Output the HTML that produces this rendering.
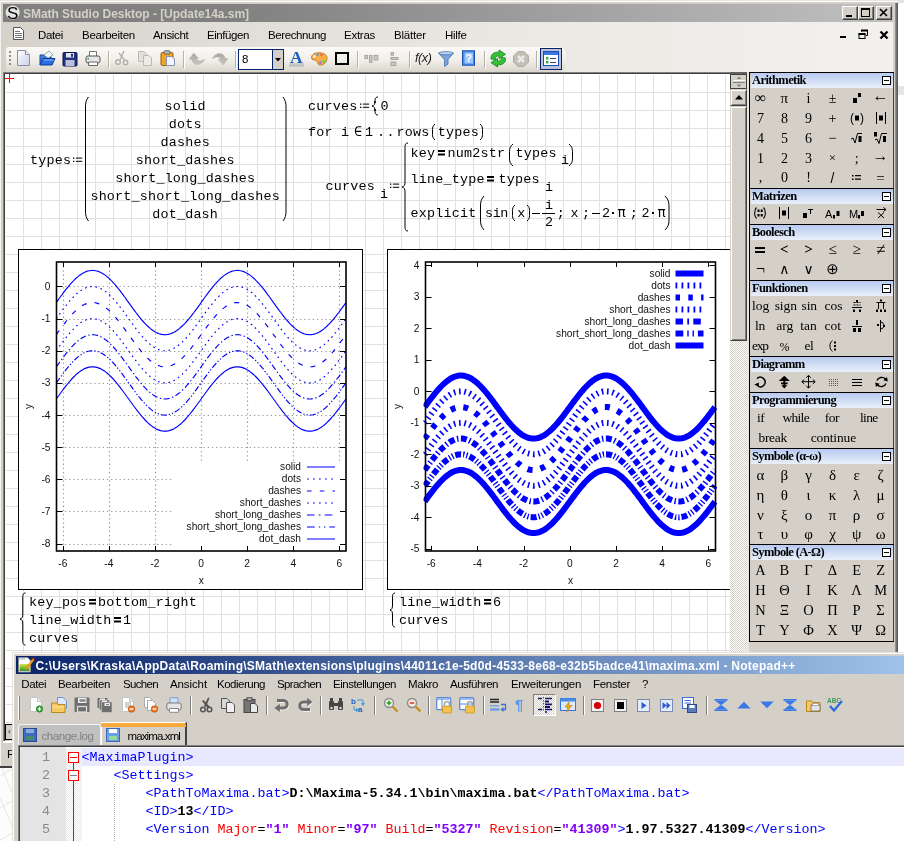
<!DOCTYPE html><html><head><meta charset="utf-8"><title>SMath Studio Desktop</title><style>*{box-sizing:border-box;margin:0;padding:0}
html,body{width:904px;height:841px;overflow:hidden;background:#fbfbfb}
body{position:relative;font-family:"Liberation Sans",sans-serif;font-size:11px;color:#000}
.a{position:absolute}
.t{position:absolute;white-space:pre;line-height:1}
svg{position:absolute;overflow:visible}
body{will-change:transform}
</style></head><body>
<div class="a" style="left:0;top:0;width:904px;height:3px;background:#e6e4de"></div>
<div class="a" style="left:898px;top:3px;width:6px;height:650px;background:#fff"></div>
<div class="a" style="left:898px;top:86px;width:6px;height:9px;background:#e4e4e4"></div>
<svg style="left:0;top:768px" width="14" height="73"><rect width="14" height="73" fill="#fcfcfc"/><path d="M0 8 L14 0 M0 40 L14 32 M0 72 L14 64 M2 0 L14 30 M0 30 L14 62" stroke="#e6e6e6" fill="none"/></svg>
<div class="a" style="left:0;top:2px;width:898px;height:766px;background:#d4d0c8"></div>
<div class="a" style="left:0;top:1px;width:898px;height:1px;background:#fff"></div>
<div class="a" style="left:0px;top:1px;width:1px;height:767px;background:#f4f3f0"></div>
<div class="a" style="left:895px;top:3px;width:3px;height:765px;background:linear-gradient(90deg,#a0a09a,#707070 50%,#505050)"></div>
<div class="a" style="left:0;top:766px;width:14px;height:2px;background:#404040"></div>
<div class="a" style="left:3px;top:4px;width:890px;height:18px;background:linear-gradient(90deg,#808080,#808080 25%,#c0c0c0)"></div>
<div class="t" style="left:23px;top:7.5px;font:bold 12px 'Liberation Sans',sans-serif;line-height:1;color:#d4d0c8;letter-spacing:-0.037px;">SMath Studio Desktop - [Update14a.sm]</div>
<svg style="left:5px;top:5px" width="16" height="16"><circle cx="7.7" cy="7.5" r="7" fill="#e4e4e4"/><text x="7.7" y="13.5" font-family="Liberation Sans" font-size="17" text-anchor="middle" fill="#000">S</text></svg>
<div class="a" style="left:842px;top:6px;width:16px;height:14px;background:#d4d0c8;border:1px solid;border-color:#fff #404040 #404040 #fff;box-shadow:inset -1px -1px 0 #808080"></div><div class="a" style="left:846px;top:15px;width:6px;height:2px;background:#000"></div><div class="a" style="left:858px;top:6px;width:16px;height:14px;background:#d4d0c8;border:1px solid;border-color:#fff #404040 #404040 #fff;box-shadow:inset -1px -1px 0 #808080"></div><div class="a" style="left:861px;top:8px;width:9px;height:9px;border:1px solid #000;border-top:2px solid #000"></div><div class="a" style="left:876px;top:6px;width:16px;height:14px;background:#d4d0c8;border:1px solid;border-color:#fff #404040 #404040 #fff;box-shadow:inset -1px -1px 0 #808080"></div><svg style="left:879px;top:8px" width="10" height="9"><path d="M1 1 L8 8 M8 1 L1 8" stroke="#000" stroke-width="1.6"/></svg>
<div class="a" style="left:3px;top:22px;width:890px;height:50px;background:linear-gradient(90deg,#d6d2ca,#e1ded7 25%,#ebe9e4 60%,#f2f1ed)"></div>
<div class="t" style="left:38px;top:30px;font:11.5px 'Liberation Sans',sans-serif;line-height:1;color:#000;letter-spacing:-0.372px;">Datei</div>
<div class="t" style="left:82px;top:30px;font:11.5px 'Liberation Sans',sans-serif;line-height:1;color:#000;letter-spacing:-0.263px;">Bearbeiten</div>
<div class="t" style="left:153px;top:30px;font:11.5px 'Liberation Sans',sans-serif;line-height:1;color:#000;letter-spacing:-0.317px;">Ansicht</div>
<div class="t" style="left:207px;top:30px;font:11.5px 'Liberation Sans',sans-serif;line-height:1;color:#000;letter-spacing:-0.426px;">Einfügen</div>
<div class="t" style="left:268px;top:30px;font:11.5px 'Liberation Sans',sans-serif;line-height:1;color:#000;letter-spacing:-0.403px;">Berechnung</div>
<div class="t" style="left:344px;top:30px;font:11.5px 'Liberation Sans',sans-serif;line-height:1;color:#000;letter-spacing:-0.266px;">Extras</div>
<div class="t" style="left:394px;top:30px;font:11.5px 'Liberation Sans',sans-serif;line-height:1;color:#000;letter-spacing:-0.179px;">Blätter</div>
<div class="t" style="left:445px;top:30px;font:11.5px 'Liberation Sans',sans-serif;line-height:1;color:#000;letter-spacing:-0.303px;">Hilfe</div>
<svg style="left:13px;top:27px" width="12" height="14"><path d="M0.5 0.5 H7.5 L10.5 3.5 V12.5 H0.5 Z" fill="#fff" stroke="#555"/><path d="M2 4.5H7 M2 6.5H9 M2 8.5H9 M2 10.5H9" stroke="#777"/></svg>
<div class="a" style="left:840px;top:36px;width:6px;height:2px;background:#000"></div>
<svg style="left:858px;top:29px" width="12" height="12"><path d="M3.5 2.5V1.5H9.5V6.5H8" fill="none" stroke="#000"/><path d="M3 1.5H10" stroke="#000" stroke-width="2"/><rect x="1" y="5" width="6" height="4.5" fill="none" stroke="#000"/><path d="M0.5 5H7.5" stroke="#000" stroke-width="2"/></svg>
<svg style="left:879px;top:30px" width="10" height="10"><path d="M1.5 1.5 L8.5 8.5 M8.5 1.5 L1.5 8.5" stroke="#000" stroke-width="2.3"/></svg>
<div class="a" style="left:3px;top:72px;width:727px;height:652px;background:#404040;border-top:1px solid #808080;border-left:1px solid #808080"></div>
<div class="a" style="left:5px;top:74px;width:725px;height:650px;background:#fff"></div>
<div class="a" style="left:6px;top:75px;width:724px;height:649px;background-image:linear-gradient(90deg,#e0e0e0 1px,transparent 1px),linear-gradient(#e0e0e0 1px,transparent 1px);background-size:18px 18px;background-position:17px 17px"></div>
<div class="a" style="left:5px;top:78px;width:9px;height:1px;background:#f00"></div><div class="a" style="left:9px;top:74px;width:1px;height:9px;background:#f00"></div>
<div class="a" style="left:4px;top:724px;width:10px;height:44px;background:#d4d0c8"></div>
<div class="a" style="left:3px;top:724px;width:2px;height:17px;background:linear-gradient(90deg,#808080 50%,#404040 50%)"></div>
<div class="a" style="left:5px;top:724px;width:7px;height:16px;background:#d4d0c8;border:1px solid #000;border-right:0;border-left-width:1.5px"></div>
<div class="a" style="left:3px;top:741px;width:9px;height:2px;background:#fff"></div>
<svg style="left:7px;top:729px" width="4" height="6"><path d="M3.2 0.5 L0.8 2.7 L3.2 5 Z" fill="#808080"/></svg>
<div class="t" style="left:7px;top:749px;font:11.5px 'Liberation Sans',sans-serif;line-height:1;color:#000;">F</div>
<div class="a" style="left:0;top:766px;width:14px;height:2px;background:#404040"></div>
<div class="a" style="left:6px;top:47px;width:560px;height:25px;border-radius:3px 7px 7px 3px;background:linear-gradient(#fbfaf8,#f0eee8 55%,#d9d5cb)"></div>
<div class="a" style="left:9px;top:51px;width:2px;height:16px;background:repeating-linear-gradient(#8f8c84 0 2px,transparent 2px 4px)"></div>
<svg style="left:16px;top:50px" width="16" height="16" viewBox="0 0 16 16"><defs><linearGradient id="gn" x1="0" y1="0" x2="1" y2="1"><stop offset="0" stop-color="#fff"/><stop offset="1" stop-color="#c9cfe8"/></linearGradient></defs><path d="M1.5 0.5 H9.5 L13.5 4.5 V15.5 H1.5 Z" fill="url(#gn)" stroke="#8a8fa8"/><path d="M9.5 0.5 V4.5 H13.5" fill="#eef" stroke="#8a8fa8"/></svg>
<svg style="left:39px;top:50px" width="16" height="16" viewBox="0 0 16 16"><path d="M1 15 V5 H5 L6 6.5 H12 V9" fill="#3d7fe0" stroke="#1246a8"/><path d="M5 5 L10 1 L14 5 L9 8 Z" fill="#f4f7ff" stroke="#8aa"/><path d="M1 15 L4 8.5 H16 L13 15 Z" fill="#2a6ee0" stroke="#0a3a9a"/><path d="M4.5 10 H14.5" stroke="#8bb8ff"/></svg>
<svg style="left:62px;top:51px" width="16" height="16" viewBox="0 0 16 16"><rect x="1" y="1.5" width="14" height="13.5" rx="1" fill="#23307e" stroke="#0e1550"/><rect x="4" y="2" width="8" height="4.5" fill="#dfe6f7"/><rect x="9" y="2.8" width="2" height="3" fill="#23307e"/><rect x="3.5" y="9" width="9" height="6" fill="#b9c0dc"/></svg>
<svg style="left:85px;top:50px" width="16" height="16" viewBox="0 0 16 16"><path d="M4.5 6 V1.5 H11.5 V6" fill="#fff" stroke="#777"/><rect x="1" y="6" width="14" height="7" rx="2" fill="#e6e6e6" stroke="#555"/><path d="M3.5 12 H12.5 V15.5 H3.5 Z" fill="#fff" stroke="#666"/><rect x="2.5" y="8" width="1.5" height="1.5" fill="#3a3"/></svg>
<div class="a" style="left:108px;top:51px;width:1px;height:17px;background:#b5b1a6"></div><div class="a" style="left:109px;top:52px;width:1px;height:17px;background:#fff"></div>
<svg style="left:114px;top:50px" width="16" height="16" viewBox="0 0 16 16"><g stroke="#b4b0a5" fill="none" stroke-width="1.4"><path d="M10 1 L6 10 M5 3 L10.5 10"/><circle cx="4" cy="12" r="2.3"/><circle cx="11.5" cy="12.5" r="2.3"/></g></svg>
<svg style="left:137px;top:50px" width="16" height="16" viewBox="0 0 16 16"><g stroke="#bdb9ae" fill="#e4e1d9"><path d="M1.5 1.5 H7 L9.5 4 V11.5 H1.5 Z"/><path d="M6.5 5.5 H12 L14.5 8 V15.5 H6.5 Z" fill="#ecebe6"/></g></svg>
<svg style="left:160px;top:50px" width="16" height="16" viewBox="0 0 16 16"><rect x="1" y="2.5" width="12" height="13" rx="1.5" fill="#f0a424" stroke="#9a5a0a"/><rect x="4" y="0.8" width="6" height="3.2" rx="1" fill="#bbb" stroke="#666"/><path d="M6.5 6.5 H12 L14.5 9 V15.5 H6.5 Z" fill="#f4f6ff" stroke="#8a90b0"/></svg>
<div class="a" style="left:183px;top:51px;width:1px;height:17px;background:#b5b1a6"></div><div class="a" style="left:184px;top:52px;width:1px;height:17px;background:#fff"></div>
<svg style="left:189px;top:50px" width="16" height="16" viewBox="0 0 16 16"><defs><linearGradient id="gu" x1="0" y1="0" x2="0" y2="1"><stop offset="0" stop-color="#a9a69e"/><stop offset="1" stop-color="#c9c6bd"/></linearGradient></defs><path d="M4.7 3 L9.7 8.5 L7.3 9 C8 11 11 12 15.8 9 C13.5 14 9 15.5 6 14 C4 13 3 11 2.8 9.2 L0 9.5 Z" fill="url(#gu)" stroke="#b5b2a9" stroke-width="0.5"/></svg>
<svg style="left:212px;top:50px" width="16" height="16" viewBox="0 0 16 16"><path d="M11.3 14.9 L6.3 9.5 L8.7 9 C8 7 5 6 0.2 8.8 C2.5 4 7 2.5 10 4 C12 5 13 7 13.2 8.8 L16 8.5 Z" fill="url(#gu)" stroke="#b5b2a9" stroke-width="0.5"/></svg>
<div class="a" style="left:235px;top:51px;width:1px;height:17px;background:#b5b1a6"></div><div class="a" style="left:236px;top:52px;width:1px;height:17px;background:#fff"></div>
<div class="a" style="left:238px;top:49px;width:46px;height:21px;background:#fff;border:1px solid #0a246a"></div>
<div class="a" style="left:272px;top:50px;width:11px;height:19px;background:#d4d0c8;border-left:1px solid #0a246a"></div>
<svg style="left:275px;top:58px" width="6" height="4"><path d="M0 0 H6 L3 3.5 Z" fill="#000"/></svg>
<div class="t" style="left:242px;top:54px;font:11.5px 'Liberation Sans',sans-serif;line-height:1;color:#000;">8</div>
<svg style="left:288px;top:50px" width="16" height="16" viewBox="0 0 16 16"><text x="8.3" y="13" font-family="Liberation Serif" font-weight="bold" font-size="17.5" text-anchor="middle" fill="#1a5fc0">A</text><rect x="1" y="13.3" width="15" height="3.6" fill="#c4c4c4"/></svg>
<svg style="left:311px;top:50px" width="16" height="16" viewBox="0 0 16 16"><path d="M7 2.8 C2.5 3 0.3 5.5 0.6 8 C0.9 10 2.5 10.2 4 10 C5.5 9.8 6 10.8 6.3 12.3 C6.8 15 9.5 15.8 12.5 14.3 C15 13 16.3 10.3 16 7.5 C15.6 4.3 12 2.6 7 2.8 Z" fill="#f6ad48" stroke="#c0741a" stroke-width="0.9"/><circle cx="3.3" cy="6.5" r="1.3" fill="#fff"/><circle cx="6.5" cy="4.8" r="1.2" fill="#4ae"/><circle cx="10.3" cy="5" r="1.2" fill="#e64"/><circle cx="13" cy="8" r="1.2" fill="#fb3"/><circle cx="12.6" cy="11.3" r="1.4" fill="#5d5"/><circle cx="9.3" cy="12.6" r="1.3" fill="#a6e"/></svg>
<svg style="left:334px;top:50px" width="16" height="16" viewBox="0 0 16 16"><rect x="2" y="3" width="12" height="11" fill="none" stroke="#000" stroke-width="2"/></svg>
<div class="a" style="left:357px;top:51px;width:1px;height:17px;background:#b5b1a6"></div><div class="a" style="left:358px;top:52px;width:1px;height:17px;background:#fff"></div>
<svg style="left:364px;top:50px" width="16" height="16" viewBox="0 0 16 16"><g fill="#c9c7c0" stroke="#a4a29a" stroke-width="0.9"><rect x="0.8" y="5.4" width="2.8" height="3.2"/><rect x="5.6" y="5.4" width="2.4" height="7"/><rect x="10" y="5.4" width="3.8" height="4.6"/></g></svg>
<svg style="left:387px;top:50px" width="16" height="16" viewBox="0 0 16 16"><g fill="#c9c7c0" stroke="#a4a29a" stroke-width="0.9"><rect x="4" y="2.6" width="2.6" height="2.6"/><rect x="4" y="7.5" width="7" height="2"/><rect x="4" y="12" width="4.8" height="3.6"/></g></svg>
<div class="a" style="left:409px;top:51px;width:1px;height:17px;background:#b5b1a6"></div><div class="a" style="left:410px;top:52px;width:1px;height:17px;background:#fff"></div>
<div class="t" style="left:415px;top:52px;font:italic 12.5px 'Liberation Sans',sans-serif;line-height:1;color:#222;letter-spacing:-0.391px;">f(x)</div>
<svg style="left:438px;top:51px" width="16" height="16" viewBox="0 0 16 16"><path d="M0.5 2 H15.5 L10 8.5 V13 L6.5 15.5 V8.5 Z" fill="#7aa4da" stroke="#3f6fae" stroke-width="0.8"/><ellipse cx="8" cy="2.2" rx="7.3" ry="1.6" fill="#b8d2f2" stroke="#3f6fae" stroke-width="0.7"/></svg>
<svg style="left:461px;top:50px" width="16" height="16" viewBox="0 0 16 16"><rect x="1.5" y="0.8" width="12" height="14.4" fill="#4a8df0" stroke="#1c4fb0"/><rect x="3.5" y="2.5" width="8.5" height="11" fill="#9cc4ff"/><text x="7.8" y="12" font-family="Liberation Sans" font-weight="bold" font-size="11" text-anchor="middle" fill="#fff">?</text></svg>
<div class="a" style="left:484px;top:51px;width:1px;height:17px;background:#b5b1a6"></div><div class="a" style="left:485px;top:52px;width:1px;height:17px;background:#fff"></div>
<svg style="left:490px;top:50px" width="16" height="16" viewBox="0 0 16 16"><g fill="#35c135" stroke="#14801a" stroke-width="0.8"><path d="M1 9 C0.5 4.5 4 1.5 9 2.3 L9 0 L15.5 4.3 L9 8.6 L9 6 C6.5 5.6 5 7 5.3 9.6 Z"/><path d="M15.5 8 C16 12.5 12.5 15.5 7.5 14.7 L7.5 17 L1 12.7 L7.5 8.4 L7.5 11 C10 11.4 11.5 10 11.2 7.4 Z"/></g></svg>
<svg style="left:513px;top:51px" width="16" height="16" viewBox="0 0 16 16"><path d="M5 0.5 H11 L15.5 5 V11 L11 15.5 H5 L0.5 11 V5 Z" fill="#c2bfb6" stroke="#b0ada4"/><path d="M5 5 L11 11 M11 5 L5 11" stroke="#ecebe6" stroke-width="2.6"/></svg>
<div class="a" style="left:536px;top:51px;width:1px;height:17px;background:#b5b1a6"></div><div class="a" style="left:537px;top:52px;width:1px;height:17px;background:#fff"></div>
<div class="a" style="left:540px;top:48px;width:22px;height:22px;background:#b8c2da;border:1px solid #0a246a"></div>
<svg style="left:543px;top:51px" width="16" height="16" viewBox="0 0 16 16"><rect x="0.5" y="0.5" width="15" height="14" fill="#fff" stroke="#1c4fb0"/><rect x="1" y="1" width="14" height="3" fill="#3a78e0"/><rect x="3" y="6" width="2.5" height="2.5" fill="#4a4"/><rect x="3" y="10" width="2.5" height="2.5" fill="#4a4"/><path d="M7 7.5 H13 M7 11.5 H13" stroke="#346"/></svg>
<div class="t" style="left:30px;top:153.7px;font:13.4px 'Liberation Mono',monospace;line-height:1;color:#000;letter-spacing:0.203px;">types</div>
<svg style="left:73px;top:157px" width="10" height="6"><rect x="0" y="0.5" width="1.3" height="1.3"/><rect x="0" y="3.7" width="1.3" height="1.3"/><rect x="2.9" y="0.6" width="6.3" height="1"/><rect x="2.9" y="3.8" width="6.3" height="1"/></svg>
<svg style="left:85.3px;top:97px" width="3.5" height="124"><path d="M3.5 0 C1.05 3.0 0.5 6.0 0.5 10 V114 C0.5 118.0 1.05 121.0 3.5 124" fill="none" stroke="#000" stroke-width="1"/></svg>
<svg style="left:282.5px;top:97px" width="3.5" height="124"><path d="M0 0 C2.4499999999999997 3.0 3.0 6.0 3.0 10 V114 C3.0 118.0 2.4499999999999997 121.0 0 124" fill="none" stroke="#000" stroke-width="1"/></svg>
<div class="t" style="left:164.6px;top:99.7px;font:13.4px 'Liberation Mono',monospace;line-height:1;color:#000;letter-spacing:0.203px;">solid</div>
<div class="t" style="left:168.7px;top:117.7px;font:13.4px 'Liberation Mono',monospace;line-height:1;color:#000;letter-spacing:0.201px;">dots</div>
<div class="t" style="left:160.5px;top:135.7px;font:13.4px 'Liberation Mono',monospace;line-height:1;color:#000;letter-spacing:0.204px;">dashes</div>
<div class="t" style="left:135.8px;top:153.7px;font:13.4px 'Liberation Mono',monospace;line-height:1;color:#000;letter-spacing:0.204px;">short_dashes</div>
<div class="t" style="left:115.2px;top:171.7px;font:13.4px 'Liberation Mono',monospace;line-height:1;color:#000;letter-spacing:0.204px;">short_long_dashes</div>
<div class="t" style="left:90.4px;top:189.7px;font:13.4px 'Liberation Mono',monospace;line-height:1;color:#000;letter-spacing:0.204px;">short_short_long_dashes</div>
<div class="t" style="left:152.2px;top:207.7px;font:13.4px 'Liberation Mono',monospace;line-height:1;color:#000;letter-spacing:0.203px;">dot_dash</div>
<div class="t" style="left:308px;top:99.7px;font:13.4px 'Liberation Mono',monospace;line-height:1;color:#000;letter-spacing:0.204px;">curves</div>
<svg style="left:359.7px;top:103px" width="10" height="6"><rect x="0" y="0.5" width="1.3" height="1.3"/><rect x="0" y="3.7" width="1.3" height="1.3"/><rect x="2.9" y="0.6" width="6.3" height="1"/><rect x="2.9" y="3.8" width="6.3" height="1"/></svg>
<svg style="left:372px;top:97px" width="6" height="18"><path d="M6 0 C2.7 0 3.0 3 3.0 6 V4.0 C3.0 7.0 2.4000000000000004 8.5 0 9.0 C2.4000000000000004 9.5 3.0 11.0 3.0 14.0 V12 C3.0 15 2.7 18 6 18" fill="none" stroke="#000" stroke-width="1"/></svg>
<div class="t" style="left:380.5px;top:99.7px;font:13.4px 'Liberation Mono',monospace;line-height:1;color:#000;letter-spacing:0.193px;">0</div>
<div class="t" style="left:308px;top:125.7px;font:13.4px 'Liberation Mono',monospace;line-height:1;color:#000;letter-spacing:0.204px;">for</div>
<div class="t" style="left:341px;top:125.7px;font:13.4px 'Liberation Mono',monospace;line-height:1;color:#000;letter-spacing:0.193px;">i</div>
<div class="t" style="left:354px;top:124.5px;font:13.5px 'DejaVu Sans Mono',monospace;line-height:1;color:#000;letter-spacing:0.359px;">∈</div>
<div class="t" style="left:365px;top:125.7px;font:13.4px 'Liberation Mono',monospace;line-height:1;color:#000;letter-spacing:0.193px;">1</div>
<div class="t" style="left:377px;top:125.7px;font:13.4px 'Liberation Mono',monospace;line-height:1;color:#000;letter-spacing:1.461px;">..</div>
<div class="t" style="left:396.5px;top:125.7px;font:13.4px 'Liberation Mono',monospace;line-height:1;color:#000;letter-spacing:0.201px;">rows</div>
<svg style="left:432px;top:124px" width="3" height="16"><path d="M3 0 C0.8999999999999999 1.68 0.5 3.36 0.5 5.6 V10.4 C0.5 12.64 0.8999999999999999 14.32 3 16" fill="none" stroke="#000" stroke-width="1"/></svg>
<div class="t" style="left:437.7px;top:125.7px;font:13.4px 'Liberation Mono',monospace;line-height:1;color:#000;letter-spacing:0.203px;">types</div>
<svg style="left:480px;top:124px" width="3" height="16"><path d="M0 0 C2.0999999999999996 1.68 2.5 3.36 2.5 5.6 V10.4 C2.5 12.64 2.0999999999999996 14.32 0 16" fill="none" stroke="#000" stroke-width="1"/></svg>
<div class="t" style="left:325.5px;top:180.2px;font:13.4px 'Liberation Mono',monospace;line-height:1;color:#000;letter-spacing:0.204px;">curves</div>
<div class="t" style="left:380px;top:188.2px;font:13.4px 'Liberation Mono',monospace;line-height:1;color:#000;letter-spacing:0.193px;">i</div>
<svg style="left:390px;top:183px" width="10" height="6"><rect x="0" y="0.5" width="1.3" height="1.3"/><rect x="0" y="3.7" width="1.3" height="1.3"/><rect x="2.9" y="0.6" width="6.3" height="1"/><rect x="2.9" y="3.8" width="6.3" height="1"/></svg>
<svg style="left:401.8px;top:143px" width="6" height="88"><path d="M6 0 C2.7 0 3.0 3 3.0 6 V39.0 C3.0 42.0 2.4000000000000004 43.5 0 44.0 C2.4000000000000004 44.5 3.0 46.0 3.0 49.0 V82 C3.0 85 2.7 88 6 88" fill="none" stroke="#000" stroke-width="1"/></svg>
<div class="t" style="left:410.5px;top:146.7px;font:13.4px 'Liberation Mono',monospace;line-height:1;color:#000;letter-spacing:0.204px;">key</div>
<svg style="left:437.5px;top:150px" width="8" height="6"><rect x="0" y="0" width="7" height="2"/><rect x="0" y="3.5" width="7" height="2"/></svg>
<div class="t" style="left:447.5px;top:146.7px;font:13.4px 'Liberation Mono',monospace;line-height:1;color:#000;letter-spacing:0.204px;">num2str</div>
<svg style="left:509px;top:144px" width="4" height="22"><path d="M4 0 C1.2 2.3099999999999996 0.5 4.619999999999999 0.5 7.699999999999999 V14.3 C0.5 17.380000000000003 1.2 19.69 4 22" fill="none" stroke="#000" stroke-width="1"/></svg>
<div class="t" style="left:515.5px;top:146.7px;font:13.4px 'Liberation Mono',monospace;line-height:1;color:#000;letter-spacing:0.203px;">types</div>
<div class="t" style="left:561px;top:154.2px;font:13.4px 'Liberation Mono',monospace;line-height:1;color:#000;letter-spacing:0.193px;">i</div>
<svg style="left:569.3px;top:144px" width="4" height="22"><path d="M0 0 C2.8 2.3099999999999996 3.5 4.619999999999999 3.5 7.699999999999999 V14.3 C3.5 17.380000000000003 2.8 19.69 0 22" fill="none" stroke="#000" stroke-width="1"/></svg>
<div class="t" style="left:410.5px;top:172.7px;font:13.4px 'Liberation Mono',monospace;line-height:1;color:#000;letter-spacing:0.204px;">line_type</div>
<svg style="left:487px;top:176px" width="8" height="6"><rect x="0" y="0" width="7" height="2"/><rect x="0" y="3.5" width="7" height="2"/></svg>
<div class="t" style="left:498.5px;top:172.7px;font:13.4px 'Liberation Mono',monospace;line-height:1;color:#000;letter-spacing:0.203px;">types</div>
<div class="t" style="left:545px;top:181.2px;font:13.4px 'Liberation Mono',monospace;line-height:1;color:#000;letter-spacing:0.193px;">i</div>
<div class="t" style="left:410.5px;top:207.2px;font:13.4px 'Liberation Mono',monospace;line-height:1;color:#000;letter-spacing:0.203px;">explicit</div>
<svg style="left:479.5px;top:196px" width="4" height="34"><path d="M4 0 C1.2 3.0 0.5 6.0 0.5 10 V24 C0.5 28.0 1.2 31.0 4 34" fill="none" stroke="#000" stroke-width="1"/></svg>
<div class="t" style="left:485px;top:207.2px;font:13.4px 'Liberation Mono',monospace;line-height:1;color:#000;letter-spacing:-0.370px;">sin</div>
<svg style="left:512.3px;top:205px" width="3" height="16"><path d="M3 0 C0.8999999999999999 1.68 0.5 3.36 0.5 5.6 V10.4 C0.5 12.64 0.8999999999999999 14.32 3 16" fill="none" stroke="#000" stroke-width="1"/></svg>
<div class="t" style="left:517.3px;top:207.2px;font:13.4px 'Liberation Mono',monospace;line-height:1;color:#000;letter-spacing:0.193px;">x</div>
<svg style="left:527px;top:205px" width="3" height="16"><path d="M0 0 C2.0999999999999996 1.68 2.5 3.36 2.5 5.6 V10.4 C2.5 12.64 2.0999999999999996 14.32 0 16" fill="none" stroke="#000" stroke-width="1"/></svg>
<div class="a" style="left:532px;top:213px;width:8px;height:1px;background:#000"></div>
<div class="t" style="left:545px;top:198.7px;font:13.4px 'Liberation Mono',monospace;line-height:1;color:#000;letter-spacing:0.193px;">i</div>
<div class="a" style="left:542px;top:213px;width:13px;height:1px;background:#000"></div>
<div class="t" style="left:545px;top:216.2px;font:13.4px 'Liberation Mono',monospace;line-height:1;color:#000;letter-spacing:0.193px;">2</div>
<div class="t" style="left:556.8px;top:207.2px;font:13.4px 'Liberation Mono',monospace;line-height:1;color:#000;letter-spacing:0.193px;">;</div>
<div class="t" style="left:570.5px;top:207.2px;font:13.4px 'Liberation Mono',monospace;line-height:1;color:#000;letter-spacing:0.193px;">x</div>
<div class="t" style="left:582px;top:207.2px;font:13.4px 'Liberation Mono',monospace;line-height:1;color:#000;letter-spacing:0.193px;">;</div>
<div class="a" style="left:592px;top:213px;width:8px;height:1px;background:#000"></div>
<div class="t" style="left:602px;top:207.2px;font:13.4px 'Liberation Mono',monospace;line-height:1;color:#000;letter-spacing:0.193px;">2</div>
<div class="a" style="left:612px;top:212px;width:2px;height:2px;background:#000"></div>
<div class="t" style="left:617.5px;top:206px;font:13.5px 'DejaVu Sans Mono',monospace;line-height:1;color:#000;letter-spacing:0.359px;">π</div>
<div class="t" style="left:629.8px;top:207.2px;font:13.4px 'Liberation Mono',monospace;line-height:1;color:#000;letter-spacing:0.193px;">;</div>
<div class="t" style="left:641.5px;top:207.2px;font:13.4px 'Liberation Mono',monospace;line-height:1;color:#000;letter-spacing:0.193px;">2</div>
<div class="a" style="left:652px;top:212px;width:2px;height:2px;background:#000"></div>
<div class="t" style="left:657.5px;top:206px;font:13.5px 'DejaVu Sans Mono',monospace;line-height:1;color:#000;letter-spacing:0.359px;">π</div>
<svg style="left:665px;top:196px" width="4.5" height="34"><path d="M0 0 C3.15 3.0 4.0 6.0 4.0 10 V24 C4.0 28.0 3.15 31.0 0 34" fill="none" stroke="#000" stroke-width="1"/></svg>
<svg style="left:20px;top:593px" width="5.5" height="52"><path d="M5.5 0 C2.475 0 2.75 3 2.75 6 V21.0 C2.75 24.0 2.2 25.5 0 26.0 C2.2 26.5 2.75 28.0 2.75 31.0 V46 C2.75 49 2.475 52 5.5 52" fill="none" stroke="#000" stroke-width="1"/></svg>
<div class="t" style="left:29px;top:595.7px;font:13.4px 'Liberation Mono',monospace;line-height:1;color:#000;letter-spacing:0.204px;">key_pos</div>
<svg style="left:88.5px;top:599px" width="8" height="6"><rect x="0" y="0" width="7" height="2"/><rect x="0" y="3.5" width="7" height="2"/></svg>
<div class="t" style="left:98px;top:595.7px;font:13.4px 'Liberation Mono',monospace;line-height:1;color:#000;letter-spacing:0.204px;">bottom_right</div>
<div class="t" style="left:29px;top:613.7px;font:13.4px 'Liberation Mono',monospace;line-height:1;color:#000;letter-spacing:0.204px;">line_width</div>
<svg style="left:113.5px;top:617px" width="8" height="6"><rect x="0" y="0" width="7" height="2"/><rect x="0" y="3.5" width="7" height="2"/></svg>
<div class="t" style="left:123px;top:613.7px;font:13.4px 'Liberation Mono',monospace;line-height:1;color:#000;letter-spacing:0.193px;">1</div>
<div class="t" style="left:29px;top:631.7px;font:13.4px 'Liberation Mono',monospace;line-height:1;color:#000;letter-spacing:0.204px;">curves</div>
<svg style="left:389.5px;top:593px" width="5" height="34"><path d="M5 0 C2.25 0 2.5 3 2.5 6 V12.0 C2.5 15.0 2.0 16.5 0 17.0 C2.0 17.5 2.5 19.0 2.5 22.0 V28 C2.5 31 2.25 34 5 34" fill="none" stroke="#000" stroke-width="1"/></svg>
<div class="t" style="left:399px;top:595.7px;font:13.4px 'Liberation Mono',monospace;line-height:1;color:#000;letter-spacing:0.204px;">line_width</div>
<svg style="left:483.5px;top:599px" width="8" height="6"><rect x="0" y="0" width="7" height="2"/><rect x="0" y="3.5" width="7" height="2"/></svg>
<div class="t" style="left:493px;top:595.7px;font:13.4px 'Liberation Mono',monospace;line-height:1;color:#000;letter-spacing:0.193px;">6</div>
<div class="t" style="left:399px;top:613.7px;font:13.4px 'Liberation Mono',monospace;line-height:1;color:#000;letter-spacing:0.204px;">curves</div>
<svg style="left:18px;top:249px" width="345" height="341" viewBox="18 249 345 341"><rect x="18.5" y="249.5" width="344" height="340" fill="#fff" stroke="#000"/><defs><clipPath id="cp18"><rect x="54.5" y="262" width="293.5" height="289"/></clipPath></defs><path d="M63.5 262 V551 M109.5 262 V551 M155.5 262 V551 M201.5 262 V461 M247.5 262 V461 M293.5 262 V461 M339.5 262 V461 M56.5 286.5 H346 M56.5 319.5 H346 M56.5 351.5 H346 M56.5 383.5 H346 M56.5 415.5 H346 M56.5 447.5 H346 M56.5 479.5 H174 M56.5 511.5 H174 M56.5 544.5 H174" stroke="#999" stroke-width="1.2" stroke-dasharray="1.3 2.9" fill="none"/><polyline points="56.3,302.6 57.7,300.6 59.2,298.5 60.6,296.5 62.1,294.6 63.5,292.6 65.0,290.7 66.4,288.9 67.9,287.1 69.3,285.3 70.8,283.7 72.2,282.1 73.7,280.6 75.1,279.1 76.5,277.8 78.0,276.6 79.4,275.4 80.9,274.4 82.3,273.5 83.8,272.7 85.2,272.0 86.7,271.4 88.1,271.0 89.6,270.7 91.0,270.5 92.5,270.4 93.9,270.5 95.4,270.7 96.8,271.0 98.3,271.4 99.7,272.0 101.2,272.7 102.6,273.5 104.1,274.4 105.5,275.4 107.0,276.6 108.4,277.8 109.9,279.1 111.3,280.6 112.8,282.1 114.2,283.7 115.7,285.3 117.1,287.1 118.5,288.9 120.0,290.7 121.4,292.6 122.9,294.6 124.3,296.5 125.8,298.5 127.2,300.6 128.7,302.6 130.1,304.6 131.6,306.6 133.0,308.6 134.5,310.6 135.9,312.5 137.4,314.4 138.8,316.3 140.3,318.1 141.7,319.8 143.2,321.5 144.6,323.1 146.1,324.6 147.5,326.0 149.0,327.3 150.4,328.6 151.9,329.7 153.3,330.7 154.8,331.7 156.2,332.5 157.7,333.1 159.1,333.7 160.5,334.1 162.0,334.5 163.4,334.6 164.9,334.7 166.3,334.6 167.8,334.5 169.2,334.1 170.7,333.7 172.1,333.1 173.6,332.5 175.0,331.7 176.5,330.7 177.9,329.7 179.4,328.6 180.8,327.3 182.3,326.0 183.7,324.6 185.2,323.1 186.6,321.5 188.1,319.8 189.5,318.1 191.0,316.3 192.4,314.4 193.9,312.5 195.3,310.6 196.8,308.6 198.2,306.6 199.7,304.6 201.1,302.6 202.5,300.6 204.0,298.5 205.4,296.5 206.9,294.6 208.3,292.6 209.8,290.7 211.2,288.9 212.7,287.1 214.1,285.3 215.6,283.7 217.0,282.1 218.5,280.6 219.9,279.1 221.4,277.8 222.8,276.6 224.3,275.4 225.7,274.4 227.2,273.5 228.6,272.7 230.1,272.0 231.5,271.4 233.0,271.0 234.4,270.7 235.9,270.5 237.3,270.4 238.8,270.5 240.2,270.7 241.7,271.0 243.1,271.4 244.5,272.0 246.0,272.7 247.4,273.5 248.9,274.4 250.3,275.4 251.8,276.6 253.2,277.8 254.7,279.1 256.1,280.6 257.6,282.1 259.0,283.7 260.5,285.3 261.9,287.1 263.4,288.9 264.8,290.7 266.3,292.6 267.7,294.6 269.2,296.5 270.6,298.5 272.1,300.6 273.5,302.6 275.0,304.6 276.4,306.6 277.9,308.6 279.3,310.6 280.8,312.5 282.2,314.4 283.7,316.3 285.1,318.1 286.5,319.8 288.0,321.5 289.4,323.1 290.9,324.6 292.3,326.0 293.8,327.3 295.2,328.6 296.7,329.7 298.1,330.7 299.6,331.7 301.0,332.5 302.5,333.1 303.9,333.7 305.4,334.1 306.8,334.5 308.3,334.6 309.7,334.7 311.2,334.6 312.6,334.5 314.1,334.1 315.5,333.7 317.0,333.1 318.4,332.5 319.9,331.7 321.3,330.7 322.8,329.7 324.2,328.6 325.7,327.3 327.1,326.0 328.5,324.6 330.0,323.1 331.4,321.5 332.9,319.8 334.3,318.1 335.8,316.3 337.2,314.4 338.7,312.5 340.1,310.6 341.6,308.6 343.0,306.6 344.5,304.6 345.9,302.6" fill="none" stroke="#0000ff" stroke-width="1.15" clip-path="url(#cp18)"/><polyline points="56.3,318.6 57.7,316.6 59.2,314.6 60.6,312.6 62.1,310.6 63.5,308.7 65.0,306.8 66.4,305.0 67.9,303.2 69.3,301.4 70.8,299.7 72.2,298.2 73.7,296.6 75.1,295.2 76.5,293.9 78.0,292.6 79.4,291.5 80.9,290.5 82.3,289.6 83.8,288.8 85.2,288.1 86.7,287.5 88.1,287.1 89.6,286.8 91.0,286.6 92.5,286.5 93.9,286.6 95.4,286.8 96.8,287.1 98.3,287.5 99.7,288.1 101.2,288.8 102.6,289.6 104.1,290.5 105.5,291.5 107.0,292.6 108.4,293.9 109.9,295.2 111.3,296.6 112.8,298.2 114.2,299.7 115.7,301.4 117.1,303.2 118.5,305.0 120.0,306.8 121.4,308.7 122.9,310.6 124.3,312.6 125.8,314.6 127.2,316.6 128.7,318.6 130.1,320.7 131.6,322.7 133.0,324.7 134.5,326.6 135.9,328.6 137.4,330.5 138.8,332.3 140.3,334.1 141.7,335.9 143.2,337.5 144.6,339.1 146.1,340.6 147.5,342.1 149.0,343.4 150.4,344.6 151.9,345.8 153.3,346.8 154.8,347.7 156.2,348.5 157.7,349.2 159.1,349.8 160.5,350.2 162.0,350.5 163.4,350.7 164.9,350.8 166.3,350.7 167.8,350.5 169.2,350.2 170.7,349.8 172.1,349.2 173.6,348.5 175.0,347.7 176.5,346.8 177.9,345.8 179.4,344.6 180.8,343.4 182.3,342.1 183.7,340.6 185.2,339.1 186.6,337.5 188.1,335.9 189.5,334.1 191.0,332.3 192.4,330.5 193.9,328.6 195.3,326.6 196.8,324.7 198.2,322.7 199.7,320.7 201.1,318.6 202.5,316.6 204.0,314.6 205.4,312.6 206.9,310.6 208.3,308.7 209.8,306.8 211.2,305.0 212.7,303.2 214.1,301.4 215.6,299.7 217.0,298.2 218.5,296.6 219.9,295.2 221.4,293.9 222.8,292.6 224.3,291.5 225.7,290.5 227.2,289.6 228.6,288.8 230.1,288.1 231.5,287.5 233.0,287.1 234.4,286.8 235.9,286.6 237.3,286.5 238.8,286.6 240.2,286.8 241.7,287.1 243.1,287.5 244.5,288.1 246.0,288.8 247.4,289.6 248.9,290.5 250.3,291.5 251.8,292.6 253.2,293.9 254.7,295.2 256.1,296.6 257.6,298.2 259.0,299.7 260.5,301.4 261.9,303.2 263.4,305.0 264.8,306.8 266.3,308.7 267.7,310.6 269.2,312.6 270.6,314.6 272.1,316.6 273.5,318.6 275.0,320.7 276.4,322.7 277.9,324.7 279.3,326.6 280.8,328.6 282.2,330.5 283.7,332.3 285.1,334.1 286.5,335.9 288.0,337.5 289.4,339.1 290.9,340.6 292.3,342.1 293.8,343.4 295.2,344.6 296.7,345.8 298.1,346.8 299.6,347.7 301.0,348.5 302.5,349.2 303.9,349.8 305.4,350.2 306.8,350.5 308.3,350.7 309.7,350.8 311.2,350.7 312.6,350.5 314.1,350.2 315.5,349.8 317.0,349.2 318.4,348.5 319.9,347.7 321.3,346.8 322.8,345.8 324.2,344.6 325.7,343.4 327.1,342.1 328.5,340.6 330.0,339.1 331.4,337.5 332.9,335.9 334.3,334.1 335.8,332.3 337.2,330.5 338.7,328.6 340.1,326.6 341.6,324.7 343.0,322.7 344.5,320.7 345.9,318.6" fill="none" stroke="#0000ff" stroke-width="1.15" stroke-dasharray="1.6 3.7" clip-path="url(#cp18)"/><polyline points="56.3,334.7 57.7,332.7 59.2,330.7 60.6,328.7 62.1,326.7 63.5,324.8 65.0,322.9 66.4,321.0 67.9,319.2 69.3,317.5 70.8,315.8 72.2,314.2 73.7,312.7 75.1,311.3 76.5,309.9 78.0,308.7 79.4,307.6 80.9,306.5 82.3,305.6 83.8,304.8 85.2,304.1 86.7,303.6 88.1,303.1 89.6,302.8 91.0,302.6 92.5,302.6 93.9,302.6 95.4,302.8 96.8,303.1 98.3,303.6 99.7,304.1 101.2,304.8 102.6,305.6 104.1,306.5 105.5,307.6 107.0,308.7 108.4,309.9 109.9,311.3 111.3,312.7 112.8,314.2 114.2,315.8 115.7,317.5 117.1,319.2 118.5,321.0 120.0,322.9 121.4,324.8 122.9,326.7 124.3,328.7 125.8,330.7 127.2,332.7 128.7,334.7 130.1,336.7 131.6,338.7 133.0,340.7 134.5,342.7 135.9,344.6 137.4,346.5 138.8,348.4 140.3,350.2 141.7,351.9 143.2,353.6 144.6,355.2 146.1,356.7 147.5,358.1 149.0,359.5 150.4,360.7 151.9,361.8 153.3,362.9 154.8,363.8 156.2,364.6 157.7,365.3 159.1,365.8 160.5,366.3 162.0,366.6 163.4,366.8 164.9,366.9 166.3,366.8 167.8,366.6 169.2,366.3 170.7,365.8 172.1,365.3 173.6,364.6 175.0,363.8 176.5,362.9 177.9,361.8 179.4,360.7 180.8,359.5 182.3,358.1 183.7,356.7 185.2,355.2 186.6,353.6 188.1,351.9 189.5,350.2 191.0,348.4 192.4,346.5 193.9,344.6 195.3,342.7 196.8,340.7 198.2,338.7 199.7,336.7 201.1,334.7 202.5,332.7 204.0,330.7 205.4,328.7 206.9,326.7 208.3,324.8 209.8,322.9 211.2,321.0 212.7,319.2 214.1,317.5 215.6,315.8 217.0,314.2 218.5,312.7 219.9,311.3 221.4,309.9 222.8,308.7 224.3,307.6 225.7,306.5 227.2,305.6 228.6,304.8 230.1,304.1 231.5,303.6 233.0,303.1 234.4,302.8 235.9,302.6 237.3,302.6 238.8,302.6 240.2,302.8 241.7,303.1 243.1,303.6 244.5,304.1 246.0,304.8 247.4,305.6 248.9,306.5 250.3,307.6 251.8,308.7 253.2,309.9 254.7,311.3 256.1,312.7 257.6,314.2 259.0,315.8 260.5,317.5 261.9,319.2 263.4,321.0 264.8,322.9 266.3,324.8 267.7,326.7 269.2,328.7 270.6,330.7 272.1,332.7 273.5,334.7 275.0,336.7 276.4,338.7 277.9,340.7 279.3,342.7 280.8,344.6 282.2,346.5 283.7,348.4 285.1,350.2 286.5,351.9 288.0,353.6 289.4,355.2 290.9,356.7 292.3,358.1 293.8,359.5 295.2,360.7 296.7,361.8 298.1,362.9 299.6,363.8 301.0,364.6 302.5,365.3 303.9,365.8 305.4,366.3 306.8,366.6 308.3,366.8 309.7,366.9 311.2,366.8 312.6,366.6 314.1,366.3 315.5,365.8 317.0,365.3 318.4,364.6 319.9,363.8 321.3,362.9 322.8,361.8 324.2,360.7 325.7,359.5 327.1,358.1 328.5,356.7 330.0,355.2 331.4,353.6 332.9,351.9 334.3,350.2 335.8,348.4 337.2,346.5 338.7,344.6 340.1,342.7 341.6,340.7 343.0,338.7 344.5,336.7 345.9,334.7" fill="none" stroke="#0000ff" stroke-width="1.15" stroke-dasharray="5 8" clip-path="url(#cp18)"/><polyline points="56.3,350.8 57.7,348.8 59.2,346.8 60.6,344.8 62.1,342.8 63.5,340.8 65.0,338.9 66.4,337.1 67.9,335.3 69.3,333.6 70.8,331.9 72.2,330.3 73.7,328.8 75.1,327.4 76.5,326.0 78.0,324.8 79.4,323.6 80.9,322.6 82.3,321.7 83.8,320.9 85.2,320.2 86.7,319.6 88.1,319.2 89.6,318.9 91.0,318.7 92.5,318.6 93.9,318.7 95.4,318.9 96.8,319.2 98.3,319.6 99.7,320.2 101.2,320.9 102.6,321.7 104.1,322.6 105.5,323.6 107.0,324.8 108.4,326.0 109.9,327.4 111.3,328.8 112.8,330.3 114.2,331.9 115.7,333.6 117.1,335.3 118.5,337.1 120.0,338.9 121.4,340.8 122.9,342.8 124.3,344.8 125.8,346.8 127.2,348.8 128.7,350.8 130.1,352.8 131.6,354.8 133.0,356.8 134.5,358.8 135.9,360.7 137.4,362.6 138.8,364.5 140.3,366.3 141.7,368.0 143.2,369.7 144.6,371.3 146.1,372.8 147.5,374.2 149.0,375.5 150.4,376.8 151.9,377.9 153.3,378.9 154.8,379.9 156.2,380.7 157.7,381.3 159.1,381.9 160.5,382.4 162.0,382.7 163.4,382.9 164.9,382.9 166.3,382.9 167.8,382.7 169.2,382.4 170.7,381.9 172.1,381.3 173.6,380.7 175.0,379.9 176.5,378.9 177.9,377.9 179.4,376.8 180.8,375.5 182.3,374.2 183.7,372.8 185.2,371.3 186.6,369.7 188.1,368.0 189.5,366.3 191.0,364.5 192.4,362.6 193.9,360.7 195.3,358.8 196.8,356.8 198.2,354.8 199.7,352.8 201.1,350.8 202.5,348.8 204.0,346.8 205.4,344.8 206.9,342.8 208.3,340.8 209.8,338.9 211.2,337.1 212.7,335.3 214.1,333.6 215.6,331.9 217.0,330.3 218.5,328.8 219.9,327.4 221.4,326.0 222.8,324.8 224.3,323.6 225.7,322.6 227.2,321.7 228.6,320.9 230.1,320.2 231.5,319.6 233.0,319.2 234.4,318.9 235.9,318.7 237.3,318.6 238.8,318.7 240.2,318.9 241.7,319.2 243.1,319.6 244.5,320.2 246.0,320.9 247.4,321.7 248.9,322.6 250.3,323.6 251.8,324.8 253.2,326.0 254.7,327.4 256.1,328.8 257.6,330.3 259.0,331.9 260.5,333.6 261.9,335.3 263.4,337.1 264.8,338.9 266.3,340.8 267.7,342.8 269.2,344.8 270.6,346.8 272.1,348.8 273.5,350.8 275.0,352.8 276.4,354.8 277.9,356.8 279.3,358.8 280.8,360.7 282.2,362.6 283.7,364.5 285.1,366.3 286.5,368.0 288.0,369.7 289.4,371.3 290.9,372.8 292.3,374.2 293.8,375.5 295.2,376.8 296.7,377.9 298.1,378.9 299.6,379.9 301.0,380.7 302.5,381.3 303.9,381.9 305.4,382.4 306.8,382.7 308.3,382.9 309.7,382.9 311.2,382.9 312.6,382.7 314.1,382.4 315.5,381.9 317.0,381.3 318.4,380.7 319.9,379.9 321.3,378.9 322.8,377.9 324.2,376.8 325.7,375.5 327.1,374.2 328.5,372.8 330.0,371.3 331.4,369.7 332.9,368.0 334.3,366.3 335.8,364.5 337.2,362.6 338.7,360.7 340.1,358.8 341.6,356.8 343.0,354.8 344.5,352.8 345.9,350.8" fill="none" stroke="#0000ff" stroke-width="1.15" stroke-dasharray="1.6 3.7" clip-path="url(#cp18)"/><polyline points="56.3,366.8 57.7,364.8 59.2,362.8 60.6,360.8 62.1,358.9 63.5,356.9 65.0,355.0 66.4,353.2 67.9,351.4 69.3,349.6 70.8,348.0 72.2,346.4 73.7,344.8 75.1,343.4 76.5,342.1 78.0,340.8 79.4,339.7 80.9,338.7 82.3,337.8 83.8,337.0 85.2,336.3 86.7,335.7 88.1,335.3 89.6,335.0 91.0,334.8 92.5,334.7 93.9,334.8 95.4,335.0 96.8,335.3 98.3,335.7 99.7,336.3 101.2,337.0 102.6,337.8 104.1,338.7 105.5,339.7 107.0,340.8 108.4,342.1 109.9,343.4 111.3,344.8 112.8,346.4 114.2,348.0 115.7,349.6 117.1,351.4 118.5,353.2 120.0,355.0 121.4,356.9 122.9,358.9 124.3,360.8 125.8,362.8 127.2,364.8 128.7,366.9 130.1,368.9 131.6,370.9 133.0,372.9 134.5,374.8 135.9,376.8 137.4,378.7 138.8,380.5 140.3,382.3 141.7,384.1 143.2,385.7 144.6,387.3 146.1,388.9 147.5,390.3 149.0,391.6 150.4,392.9 151.9,394.0 153.3,395.0 154.8,395.9 156.2,396.7 157.7,397.4 159.1,398.0 160.5,398.4 162.0,398.7 163.4,398.9 164.9,399.0 166.3,398.9 167.8,398.7 169.2,398.4 170.7,398.0 172.1,397.4 173.6,396.7 175.0,395.9 176.5,395.0 177.9,394.0 179.4,392.9 180.8,391.6 182.3,390.3 183.7,388.9 185.2,387.3 186.6,385.7 188.1,384.1 189.5,382.3 191.0,380.5 192.4,378.7 193.9,376.8 195.3,374.8 196.8,372.9 198.2,370.9 199.7,368.9 201.1,366.9 202.5,364.8 204.0,362.8 205.4,360.8 206.9,358.9 208.3,356.9 209.8,355.0 211.2,353.2 212.7,351.4 214.1,349.6 215.6,348.0 217.0,346.4 218.5,344.8 219.9,343.4 221.4,342.1 222.8,340.8 224.3,339.7 225.7,338.7 227.2,337.8 228.6,337.0 230.1,336.3 231.5,335.7 233.0,335.3 234.4,335.0 235.9,334.8 237.3,334.7 238.8,334.8 240.2,335.0 241.7,335.3 243.1,335.7 244.5,336.3 246.0,337.0 247.4,337.8 248.9,338.7 250.3,339.7 251.8,340.8 253.2,342.1 254.7,343.4 256.1,344.8 257.6,346.4 259.0,348.0 260.5,349.6 261.9,351.4 263.4,353.2 264.8,355.0 266.3,356.9 267.7,358.9 269.2,360.8 270.6,362.8 272.1,364.8 273.5,366.9 275.0,368.9 276.4,370.9 277.9,372.9 279.3,374.8 280.8,376.8 282.2,378.7 283.7,380.5 285.1,382.3 286.5,384.1 288.0,385.7 289.4,387.3 290.9,388.9 292.3,390.3 293.8,391.6 295.2,392.9 296.7,394.0 298.1,395.0 299.6,395.9 301.0,396.7 302.5,397.4 303.9,398.0 305.4,398.4 306.8,398.7 308.3,398.9 309.7,399.0 311.2,398.9 312.6,398.7 314.1,398.4 315.5,398.0 317.0,397.4 318.4,396.7 319.9,395.9 321.3,395.0 322.8,394.0 324.2,392.9 325.7,391.6 327.1,390.3 328.5,388.9 330.0,387.3 331.4,385.7 332.9,384.1 334.3,382.3 335.8,380.5 337.2,378.7 338.7,376.8 340.1,374.8 341.6,372.9 343.0,370.9 344.5,368.9 345.9,366.9" fill="none" stroke="#0000ff" stroke-width="1.15" stroke-dasharray="6 2.5 1.4 2.5" clip-path="url(#cp18)"/><polyline points="56.3,382.9 57.7,380.9 59.2,378.9 60.6,376.9 62.1,374.9 63.5,373.0 65.0,371.1 66.4,369.2 67.9,367.4 69.3,365.7 70.8,364.0 72.2,362.4 73.7,360.9 75.1,359.5 76.5,358.2 78.0,356.9 79.4,355.8 80.9,354.8 82.3,353.8 83.8,353.0 85.2,352.4 86.7,351.8 88.1,351.3 89.6,351.0 91.0,350.8 92.5,350.8 93.9,350.8 95.4,351.0 96.8,351.3 98.3,351.8 99.7,352.4 101.2,353.0 102.6,353.8 104.1,354.8 105.5,355.8 107.0,356.9 108.4,358.2 109.9,359.5 111.3,360.9 112.8,362.4 114.2,364.0 115.7,365.7 117.1,367.4 118.5,369.2 120.0,371.1 121.4,373.0 122.9,374.9 124.3,376.9 125.8,378.9 127.2,380.9 128.7,382.9 130.1,384.9 131.6,386.9 133.0,388.9 134.5,390.9 135.9,392.9 137.4,394.8 138.8,396.6 140.3,398.4 141.7,400.1 143.2,401.8 144.6,403.4 146.1,404.9 147.5,406.3 149.0,407.7 150.4,408.9 151.9,410.1 153.3,411.1 154.8,412.0 156.2,412.8 157.7,413.5 159.1,414.1 160.5,414.5 162.0,414.8 163.4,415.0 164.9,415.1 166.3,415.0 167.8,414.8 169.2,414.5 170.7,414.1 172.1,413.5 173.6,412.8 175.0,412.0 176.5,411.1 177.9,410.1 179.4,408.9 180.8,407.7 182.3,406.3 183.7,404.9 185.2,403.4 186.6,401.8 188.1,400.1 189.5,398.4 191.0,396.6 192.4,394.8 193.9,392.9 195.3,390.9 196.8,388.9 198.2,386.9 199.7,384.9 201.1,382.9 202.5,380.9 204.0,378.9 205.4,376.9 206.9,374.9 208.3,373.0 209.8,371.1 211.2,369.2 212.7,367.4 214.1,365.7 215.6,364.0 217.0,362.4 218.5,360.9 219.9,359.5 221.4,358.2 222.8,356.9 224.3,355.8 225.7,354.8 227.2,353.8 228.6,353.0 230.1,352.4 231.5,351.8 233.0,351.3 234.4,351.0 235.9,350.8 237.3,350.8 238.8,350.8 240.2,351.0 241.7,351.3 243.1,351.8 244.5,352.4 246.0,353.0 247.4,353.8 248.9,354.8 250.3,355.8 251.8,356.9 253.2,358.2 254.7,359.5 256.1,360.9 257.6,362.4 259.0,364.0 260.5,365.7 261.9,367.4 263.4,369.2 264.8,371.1 266.3,373.0 267.7,374.9 269.2,376.9 270.6,378.9 272.1,380.9 273.5,382.9 275.0,384.9 276.4,386.9 277.9,388.9 279.3,390.9 280.8,392.9 282.2,394.8 283.7,396.6 285.1,398.4 286.5,400.1 288.0,401.8 289.4,403.4 290.9,404.9 292.3,406.3 293.8,407.7 295.2,408.9 296.7,410.1 298.1,411.1 299.6,412.0 301.0,412.8 302.5,413.5 303.9,414.1 305.4,414.5 306.8,414.8 308.3,415.0 309.7,415.1 311.2,415.0 312.6,414.8 314.1,414.5 315.5,414.1 317.0,413.5 318.4,412.8 319.9,412.0 321.3,411.1 322.8,410.1 324.2,408.9 325.7,407.7 327.1,406.3 328.5,404.9 330.0,403.4 331.4,401.8 332.9,400.1 334.3,398.4 335.8,396.6 337.2,394.8 338.7,392.9 340.1,390.9 341.6,388.9 343.0,386.9 344.5,384.9 345.9,382.9" fill="none" stroke="#0000ff" stroke-width="1.15" stroke-dasharray="6 2 1.3 2 1.3 2" clip-path="url(#cp18)"/><polyline points="56.3,399.0 57.7,397.0 59.2,395.0 60.6,393.0 62.1,391.0 63.5,389.1 65.0,387.2 66.4,385.3 67.9,383.5 69.3,381.8 70.8,380.1 72.2,378.5 73.7,377.0 75.1,375.6 76.5,374.2 78.0,373.0 79.4,371.9 80.9,370.8 82.3,369.9 83.8,369.1 85.2,368.4 86.7,367.9 88.1,367.4 89.6,367.1 91.0,366.9 92.5,366.9 93.9,366.9 95.4,367.1 96.8,367.4 98.3,367.9 99.7,368.4 101.2,369.1 102.6,369.9 104.1,370.8 105.5,371.9 107.0,373.0 108.4,374.2 109.9,375.6 111.3,377.0 112.8,378.5 114.2,380.1 115.7,381.8 117.1,383.5 118.5,385.3 120.0,387.2 121.4,389.1 122.9,391.0 124.3,393.0 125.8,395.0 127.2,397.0 128.7,399.0 130.1,401.0 131.6,403.0 133.0,405.0 134.5,407.0 135.9,408.9 137.4,410.8 138.8,412.7 140.3,414.5 141.7,416.2 143.2,417.9 144.6,419.5 146.1,421.0 147.5,422.4 149.0,423.8 150.4,425.0 151.9,426.1 153.3,427.2 154.8,428.1 156.2,428.9 157.7,429.6 159.1,430.1 160.5,430.6 162.0,430.9 163.4,431.1 164.9,431.1 166.3,431.1 167.8,430.9 169.2,430.6 170.7,430.1 172.1,429.6 173.6,428.9 175.0,428.1 176.5,427.2 177.9,426.1 179.4,425.0 180.8,423.8 182.3,422.4 183.7,421.0 185.2,419.5 186.6,417.9 188.1,416.2 189.5,414.5 191.0,412.7 192.4,410.8 193.9,408.9 195.3,407.0 196.8,405.0 198.2,403.0 199.7,401.0 201.1,399.0 202.5,397.0 204.0,395.0 205.4,393.0 206.9,391.0 208.3,389.1 209.8,387.2 211.2,385.3 212.7,383.5 214.1,381.8 215.6,380.1 217.0,378.5 218.5,377.0 219.9,375.6 221.4,374.2 222.8,373.0 224.3,371.9 225.7,370.8 227.2,369.9 228.6,369.1 230.1,368.4 231.5,367.9 233.0,367.4 234.4,367.1 235.9,366.9 237.3,366.9 238.8,366.9 240.2,367.1 241.7,367.4 243.1,367.9 244.5,368.4 246.0,369.1 247.4,369.9 248.9,370.8 250.3,371.9 251.8,373.0 253.2,374.2 254.7,375.6 256.1,377.0 257.6,378.5 259.0,380.1 260.5,381.8 261.9,383.5 263.4,385.3 264.8,387.2 266.3,389.1 267.7,391.0 269.2,393.0 270.6,395.0 272.1,397.0 273.5,399.0 275.0,401.0 276.4,403.0 277.9,405.0 279.3,407.0 280.8,408.9 282.2,410.8 283.7,412.7 285.1,414.5 286.5,416.2 288.0,417.9 289.4,419.5 290.9,421.0 292.3,422.4 293.8,423.8 295.2,425.0 296.7,426.1 298.1,427.2 299.6,428.1 301.0,428.9 302.5,429.6 303.9,430.1 305.4,430.6 306.8,430.9 308.3,431.1 309.7,431.1 311.2,431.1 312.6,430.9 314.1,430.6 315.5,430.1 317.0,429.6 318.4,428.9 319.9,428.1 321.3,427.2 322.8,426.1 324.2,425.0 325.7,423.8 327.1,422.4 328.5,421.0 330.0,419.5 331.4,417.9 332.9,416.2 334.3,414.5 335.8,412.7 337.2,410.8 338.7,408.9 340.1,407.0 341.6,405.0 343.0,403.0 344.5,401.0 345.9,399.0" fill="none" stroke="#0000ff" stroke-width="1.15" clip-path="url(#cp18)"/><rect x="56.5" y="262" width="289.5" height="289" fill="none" stroke="#000" stroke-width="1.6"/><path d="M63.5 551 v-5 M63.5 262 v5 M109.5 551 v-5 M109.5 262 v5 M155.5 551 v-5 M155.5 262 v5 M201.5 551 v-5 M201.5 262 v5 M247.5 551 v-5 M247.5 262 v5 M293.5 551 v-5 M293.5 262 v5 M339.5 551 v-5 M339.5 262 v5 M56.5 286.5 h6 M346 286.5 h-6 M56.5 319.5 h6 M346 319.5 h-6 M56.5 351.5 h6 M346 351.5 h-6 M56.5 383.5 h6 M346 383.5 h-6 M56.5 415.5 h6 M346 415.5 h-6 M56.5 447.5 h6 M346 447.5 h-6 M56.5 479.5 h6 M346 479.5 h-6 M56.5 511.5 h6 M346 511.5 h-6 M56.5 544.5 h6 M346 544.5 h-6" stroke="#000" fill="none"/><text x="62.8" y="567" font-family="Liberation Sans" font-size="10.2" text-anchor="middle" fill="#111">-6</text><text x="108.9" y="567" font-family="Liberation Sans" font-size="10.2" text-anchor="middle" fill="#111">-4</text><text x="155.0" y="567" font-family="Liberation Sans" font-size="10.2" text-anchor="middle" fill="#111">-2</text><text x="201.1" y="567" font-family="Liberation Sans" font-size="10.2" text-anchor="middle" fill="#111">0</text><text x="247.2" y="567" font-family="Liberation Sans" font-size="10.2" text-anchor="middle" fill="#111">2</text><text x="293.3" y="567" font-family="Liberation Sans" font-size="10.2" text-anchor="middle" fill="#111">4</text><text x="339.4" y="567" font-family="Liberation Sans" font-size="10.2" text-anchor="middle" fill="#111">6</text><text x="50.5" y="290.0" font-family="Liberation Sans" font-size="10.2" text-anchor="end" fill="#111">0</text><text x="50.5" y="322.1" font-family="Liberation Sans" font-size="10.2" text-anchor="end" fill="#111">-1</text><text x="50.5" y="354.3" font-family="Liberation Sans" font-size="10.2" text-anchor="end" fill="#111">-2</text><text x="50.5" y="386.4" font-family="Liberation Sans" font-size="10.2" text-anchor="end" fill="#111">-3</text><text x="50.5" y="418.6" font-family="Liberation Sans" font-size="10.2" text-anchor="end" fill="#111">-4</text><text x="50.5" y="450.7" font-family="Liberation Sans" font-size="10.2" text-anchor="end" fill="#111">-5</text><text x="50.5" y="482.8" font-family="Liberation Sans" font-size="10.2" text-anchor="end" fill="#111">-6</text><text x="50.5" y="515.0" font-family="Liberation Sans" font-size="10.2" text-anchor="end" fill="#111">-7</text><text x="50.5" y="547.1" font-family="Liberation Sans" font-size="10.2" text-anchor="end" fill="#111">-8</text><text x="201.2" y="584" font-family="Liberation Sans" font-size="10.2" text-anchor="middle" fill="#111">x</text><text transform="translate(31.5 406.5) rotate(-90)" font-family="Liberation Sans" font-size="10.2" text-anchor="middle" fill="#111">y</text><text x="301" y="470.2" font-family="Liberation Sans" font-size="10.2" text-anchor="end" fill="#111">solid</text><path d="M307 467 H335" stroke="#0000ff" stroke-width="1"/><text x="301" y="482.2" font-family="Liberation Sans" font-size="10.2" text-anchor="end" fill="#111">dots</text><path d="M307 479 H335" stroke="#0000ff" stroke-width="1" stroke-dasharray="1.8 4.2"/><text x="301" y="494.2" font-family="Liberation Sans" font-size="10.2" text-anchor="end" fill="#111">dashes</text><path d="M307 491 H335" stroke="#0000ff" stroke-width="1" stroke-dasharray="4.5 8.3"/><text x="301" y="506.2" font-family="Liberation Sans" font-size="10.2" text-anchor="end" fill="#111">short_dashes</text><path d="M307 503 H335" stroke="#0000ff" stroke-width="1" stroke-dasharray="1.8 4.2"/><text x="301" y="518.2" font-family="Liberation Sans" font-size="10.2" text-anchor="end" fill="#111">short_long_dashes</text><path d="M307 515 H335" stroke="#0000ff" stroke-width="1" stroke-dasharray="7.5 4.3 1.7 4.3"/><text x="301" y="530.2" font-family="Liberation Sans" font-size="10.2" text-anchor="end" fill="#111">short_short_long_dashes</text><path d="M307 527 H335" stroke="#0000ff" stroke-width="1" stroke-dasharray="7.8 4 1.4 3.8 1.4 4"/><text x="301" y="542.2" font-family="Liberation Sans" font-size="10.2" text-anchor="end" fill="#111">dot_dash</text><path d="M307 539 H335" stroke="#0000ff" stroke-width="1"/></svg>
<div class="a" style="left:387px;top:249px;width:343px;height:341px;overflow:hidden">
<div class="a" style="left:-387px;top:-249px">
<svg style="left:387px;top:249px" width="360" height="341" viewBox="387 249 360 341"><rect x="387.5" y="249.5" width="359" height="340" fill="#fff" stroke="#000"/><defs><clipPath id="cp387"><rect x="423.5" y="262" width="294.0" height="289"/></clipPath></defs><polyline points="424.7,407.1 426.1,405.1 427.6,403.1 429.0,401.1 430.5,399.2 431.9,397.3 433.4,395.5 434.8,393.6 436.3,391.9 437.7,390.2 439.2,388.5 440.6,387.0 442.1,385.5 443.5,384.1 445.0,382.8 446.4,381.6 447.9,380.5 449.3,379.4 450.8,378.5 452.2,377.8 453.7,377.1 455.1,376.5 456.6,376.1 458.0,375.8 459.5,375.6 460.9,375.6 462.4,375.6 463.8,375.8 465.3,376.1 466.7,376.5 468.2,377.1 469.7,377.8 471.1,378.5 472.6,379.4 474.0,380.5 475.5,381.6 476.9,382.8 478.4,384.1 479.8,385.5 481.3,387.0 482.7,388.5 484.2,390.2 485.6,391.9 487.1,393.6 488.5,395.5 490.0,397.3 491.4,399.2 492.9,401.1 494.3,403.1 495.8,405.1 497.2,407.1 498.7,409.0 500.1,411.0 501.6,413.0 503.0,414.9 504.5,416.8 505.9,418.6 507.4,420.5 508.8,422.2 510.3,423.9 511.7,425.6 513.2,427.1 514.6,428.6 516.1,430.0 517.5,431.3 519.0,432.5 520.5,433.6 521.9,434.7 523.4,435.6 524.8,436.3 526.3,437.0 527.7,437.6 529.2,438.0 530.6,438.3 532.1,438.5 533.5,438.6 535.0,438.5 536.4,438.3 537.9,438.0 539.3,437.6 540.8,437.0 542.2,436.3 543.7,435.6 545.1,434.7 546.6,433.6 548.0,432.5 549.5,431.3 550.9,430.0 552.4,428.6 553.8,427.1 555.3,425.6 556.7,423.9 558.2,422.2 559.6,420.5 561.1,418.6 562.5,416.8 564.0,414.9 565.4,413.0 566.9,411.0 568.3,409.0 569.8,407.1 571.3,405.1 572.7,403.1 574.2,401.1 575.6,399.2 577.1,397.3 578.5,395.5 580.0,393.6 581.4,391.9 582.9,390.2 584.3,388.5 585.8,387.0 587.2,385.5 588.7,384.1 590.1,382.8 591.6,381.6 593.0,380.5 594.5,379.4 595.9,378.5 597.4,377.8 598.8,377.1 600.3,376.5 601.7,376.1 603.2,375.8 604.6,375.6 606.1,375.6 607.5,375.6 609.0,375.8 610.4,376.1 611.9,376.5 613.3,377.1 614.8,377.8 616.2,378.5 617.7,379.4 619.1,380.5 620.6,381.6 622.1,382.8 623.5,384.1 625.0,385.5 626.4,387.0 627.9,388.5 629.3,390.2 630.8,391.9 632.2,393.6 633.7,395.5 635.1,397.3 636.6,399.2 638.0,401.1 639.5,403.1 640.9,405.1 642.4,407.1 643.8,409.0 645.3,411.0 646.7,413.0 648.2,414.9 649.6,416.8 651.1,418.6 652.5,420.5 654.0,422.2 655.4,423.9 656.9,425.6 658.3,427.1 659.8,428.6 661.2,430.0 662.7,431.3 664.1,432.5 665.6,433.6 667.0,434.7 668.5,435.6 669.9,436.3 671.4,437.0 672.9,437.6 674.3,438.0 675.8,438.3 677.2,438.5 678.7,438.6 680.1,438.5 681.6,438.3 683.0,438.0 684.5,437.6 685.9,437.0 687.4,436.3 688.8,435.6 690.3,434.7 691.7,433.6 693.2,432.5 694.6,431.3 696.1,430.0 697.5,428.6 699.0,427.1 700.4,425.6 701.9,423.9 703.3,422.2 704.8,420.5 706.2,418.6 707.7,416.8 709.1,414.9 710.6,413.0 712.0,411.0 713.5,409.0 714.9,407.1" fill="none" stroke="#0000ff" stroke-width="6" clip-path="url(#cp387)"/><polyline points="424.7,422.8 426.1,420.8 427.6,418.9 429.0,416.9 430.5,415.0 431.9,413.1 433.4,411.2 434.8,409.4 436.3,407.6 437.7,405.9 439.2,404.3 440.6,402.7 442.1,401.2 443.5,399.8 445.0,398.5 446.4,397.3 447.9,396.2 449.3,395.2 450.8,394.3 452.2,393.5 453.7,392.8 455.1,392.3 456.6,391.9 458.0,391.5 459.5,391.4 460.9,391.3 462.4,391.4 463.8,391.5 465.3,391.9 466.7,392.3 468.2,392.8 469.7,393.5 471.1,394.3 472.6,395.2 474.0,396.2 475.5,397.3 476.9,398.5 478.4,399.8 479.8,401.2 481.3,402.7 482.7,404.3 484.2,405.9 485.6,407.6 487.1,409.4 488.5,411.2 490.0,413.1 491.4,415.0 492.9,416.9 494.3,418.9 495.8,420.8 497.2,422.8 498.7,424.8 500.1,426.7 501.6,428.7 503.0,430.6 504.5,432.5 505.9,434.4 507.4,436.2 508.8,438.0 510.3,439.7 511.7,441.3 513.2,442.9 514.6,444.4 516.1,445.8 517.5,447.1 519.0,448.3 520.5,449.4 521.9,450.4 523.4,451.3 524.8,452.1 526.3,452.8 527.7,453.3 529.2,453.7 530.6,454.1 532.1,454.2 533.5,454.3 535.0,454.2 536.4,454.1 537.9,453.7 539.3,453.3 540.8,452.8 542.2,452.1 543.7,451.3 545.1,450.4 546.6,449.4 548.0,448.3 549.5,447.1 550.9,445.8 552.4,444.4 553.8,442.9 555.3,441.3 556.7,439.7 558.2,438.0 559.6,436.2 561.1,434.4 562.5,432.5 564.0,430.6 565.4,428.7 566.9,426.7 568.3,424.8 569.8,422.8 571.3,420.8 572.7,418.9 574.2,416.9 575.6,415.0 577.1,413.1 578.5,411.2 580.0,409.4 581.4,407.6 582.9,405.9 584.3,404.3 585.8,402.7 587.2,401.2 588.7,399.8 590.1,398.5 591.6,397.3 593.0,396.2 594.5,395.2 595.9,394.3 597.4,393.5 598.8,392.8 600.3,392.3 601.7,391.9 603.2,391.5 604.6,391.4 606.1,391.3 607.5,391.4 609.0,391.5 610.4,391.9 611.9,392.3 613.3,392.8 614.8,393.5 616.2,394.3 617.7,395.2 619.1,396.2 620.6,397.3 622.1,398.5 623.5,399.8 625.0,401.2 626.4,402.7 627.9,404.3 629.3,405.9 630.8,407.6 632.2,409.4 633.7,411.2 635.1,413.1 636.6,415.0 638.0,416.9 639.5,418.9 640.9,420.8 642.4,422.8 643.8,424.8 645.3,426.7 646.7,428.7 648.2,430.6 649.6,432.5 651.1,434.4 652.5,436.2 654.0,438.0 655.4,439.7 656.9,441.3 658.3,442.9 659.8,444.4 661.2,445.8 662.7,447.1 664.1,448.3 665.6,449.4 667.0,450.4 668.5,451.3 669.9,452.1 671.4,452.8 672.9,453.3 674.3,453.7 675.8,454.1 677.2,454.2 678.7,454.3 680.1,454.2 681.6,454.1 683.0,453.7 684.5,453.3 685.9,452.8 687.4,452.1 688.8,451.3 690.3,450.4 691.7,449.4 693.2,448.3 694.6,447.1 696.1,445.8 697.5,444.4 699.0,442.9 700.4,441.3 701.9,439.7 703.3,438.0 704.8,436.2 706.2,434.4 707.7,432.5 709.1,430.6 710.6,428.7 712.0,426.7 713.5,424.8 714.9,422.8" fill="none" stroke="#0000ff" stroke-width="6" stroke-dasharray="1.6 3.7" clip-path="url(#cp387)"/><polyline points="424.7,438.6 426.1,436.6 427.6,434.6 429.0,432.6 430.5,430.7 431.9,428.8 433.4,427.0 434.8,425.1 436.3,423.4 437.7,421.7 439.2,420.0 440.6,418.5 442.1,417.0 443.5,415.6 445.0,414.3 446.4,413.1 447.9,412.0 449.3,410.9 450.8,410.0 452.2,409.3 453.7,408.6 455.1,408.0 456.6,407.6 458.0,407.3 459.5,407.1 460.9,407.1 462.4,407.1 463.8,407.3 465.3,407.6 466.7,408.0 468.2,408.6 469.7,409.3 471.1,410.0 472.6,410.9 474.0,412.0 475.5,413.1 476.9,414.3 478.4,415.6 479.8,417.0 481.3,418.5 482.7,420.0 484.2,421.7 485.6,423.4 487.1,425.1 488.5,427.0 490.0,428.8 491.4,430.7 492.9,432.6 494.3,434.6 495.8,436.6 497.2,438.6 498.7,440.5 500.1,442.5 501.6,444.5 503.0,446.4 504.5,448.3 505.9,450.1 507.4,452.0 508.8,453.7 510.3,455.4 511.7,457.1 513.2,458.6 514.6,460.1 516.1,461.5 517.5,462.8 519.0,464.0 520.5,465.1 521.9,466.2 523.4,467.1 524.8,467.8 526.3,468.5 527.7,469.1 529.2,469.5 530.6,469.8 532.1,470.0 533.5,470.1 535.0,470.0 536.4,469.8 537.9,469.5 539.3,469.1 540.8,468.5 542.2,467.8 543.7,467.1 545.1,466.2 546.6,465.1 548.0,464.0 549.5,462.8 550.9,461.5 552.4,460.1 553.8,458.6 555.3,457.1 556.7,455.4 558.2,453.7 559.6,452.0 561.1,450.1 562.5,448.3 564.0,446.4 565.4,444.5 566.9,442.5 568.3,440.5 569.8,438.6 571.3,436.6 572.7,434.6 574.2,432.6 575.6,430.7 577.1,428.8 578.5,427.0 580.0,425.1 581.4,423.4 582.9,421.7 584.3,420.0 585.8,418.5 587.2,417.0 588.7,415.6 590.1,414.3 591.6,413.1 593.0,412.0 594.5,410.9 595.9,410.0 597.4,409.3 598.8,408.6 600.3,408.0 601.7,407.6 603.2,407.3 604.6,407.1 606.1,407.1 607.5,407.1 609.0,407.3 610.4,407.6 611.9,408.0 613.3,408.6 614.8,409.3 616.2,410.0 617.7,410.9 619.1,412.0 620.6,413.1 622.1,414.3 623.5,415.6 625.0,417.0 626.4,418.5 627.9,420.0 629.3,421.7 630.8,423.4 632.2,425.1 633.7,427.0 635.1,428.8 636.6,430.7 638.0,432.6 639.5,434.6 640.9,436.6 642.4,438.6 643.8,440.5 645.3,442.5 646.7,444.5 648.2,446.4 649.6,448.3 651.1,450.1 652.5,452.0 654.0,453.7 655.4,455.4 656.9,457.1 658.3,458.6 659.8,460.1 661.2,461.5 662.7,462.8 664.1,464.0 665.6,465.1 667.0,466.2 668.5,467.1 669.9,467.8 671.4,468.5 672.9,469.1 674.3,469.5 675.8,469.8 677.2,470.0 678.7,470.1 680.1,470.0 681.6,469.8 683.0,469.5 684.5,469.1 685.9,468.5 687.4,467.8 688.8,467.1 690.3,466.2 691.7,465.1 693.2,464.0 694.6,462.8 696.1,461.5 697.5,460.1 699.0,458.6 700.4,457.1 701.9,455.4 703.3,453.7 704.8,452.0 706.2,450.1 707.7,448.3 709.1,446.4 710.6,444.5 712.0,442.5 713.5,440.5 714.9,438.6" fill="none" stroke="#0000ff" stroke-width="6" stroke-dasharray="5 8" clip-path="url(#cp387)"/><polyline points="424.7,454.3 426.1,452.3 427.6,450.4 429.0,448.4 430.5,446.5 431.9,444.6 433.4,442.7 434.8,440.9 436.3,439.1 437.7,437.4 439.2,435.8 440.6,434.2 442.1,432.7 443.5,431.3 445.0,430.0 446.4,428.8 447.9,427.7 449.3,426.7 450.8,425.8 452.2,425.0 453.7,424.3 455.1,423.8 456.6,423.4 458.0,423.0 459.5,422.9 460.9,422.8 462.4,422.9 463.8,423.0 465.3,423.4 466.7,423.8 468.2,424.3 469.7,425.0 471.1,425.8 472.6,426.7 474.0,427.7 475.5,428.8 476.9,430.0 478.4,431.3 479.8,432.7 481.3,434.2 482.7,435.8 484.2,437.4 485.6,439.1 487.1,440.9 488.5,442.7 490.0,444.6 491.4,446.5 492.9,448.4 494.3,450.4 495.8,452.3 497.2,454.3 498.7,456.3 500.1,458.2 501.6,460.2 503.0,462.1 504.5,464.0 505.9,465.9 507.4,467.7 508.8,469.5 510.3,471.2 511.7,472.8 513.2,474.4 514.6,475.9 516.1,477.3 517.5,478.6 519.0,479.8 520.5,480.9 521.9,481.9 523.4,482.8 524.8,483.6 526.3,484.3 527.7,484.8 529.2,485.2 530.6,485.6 532.1,485.7 533.5,485.8 535.0,485.7 536.4,485.6 537.9,485.2 539.3,484.8 540.8,484.3 542.2,483.6 543.7,482.8 545.1,481.9 546.6,480.9 548.0,479.8 549.5,478.6 550.9,477.3 552.4,475.9 553.8,474.4 555.3,472.8 556.7,471.2 558.2,469.5 559.6,467.7 561.1,465.9 562.5,464.0 564.0,462.1 565.4,460.2 566.9,458.2 568.3,456.3 569.8,454.3 571.3,452.3 572.7,450.4 574.2,448.4 575.6,446.5 577.1,444.6 578.5,442.7 580.0,440.9 581.4,439.1 582.9,437.4 584.3,435.8 585.8,434.2 587.2,432.7 588.7,431.3 590.1,430.0 591.6,428.8 593.0,427.7 594.5,426.7 595.9,425.8 597.4,425.0 598.8,424.3 600.3,423.8 601.7,423.4 603.2,423.0 604.6,422.9 606.1,422.8 607.5,422.9 609.0,423.0 610.4,423.4 611.9,423.8 613.3,424.3 614.8,425.0 616.2,425.8 617.7,426.7 619.1,427.7 620.6,428.8 622.1,430.0 623.5,431.3 625.0,432.7 626.4,434.2 627.9,435.8 629.3,437.4 630.8,439.1 632.2,440.9 633.7,442.7 635.1,444.6 636.6,446.5 638.0,448.4 639.5,450.4 640.9,452.3 642.4,454.3 643.8,456.3 645.3,458.2 646.7,460.2 648.2,462.1 649.6,464.0 651.1,465.9 652.5,467.7 654.0,469.5 655.4,471.2 656.9,472.8 658.3,474.4 659.8,475.9 661.2,477.3 662.7,478.6 664.1,479.8 665.6,480.9 667.0,481.9 668.5,482.8 669.9,483.6 671.4,484.3 672.9,484.8 674.3,485.2 675.8,485.6 677.2,485.7 678.7,485.8 680.1,485.7 681.6,485.6 683.0,485.2 684.5,484.8 685.9,484.3 687.4,483.6 688.8,482.8 690.3,481.9 691.7,480.9 693.2,479.8 694.6,478.6 696.1,477.3 697.5,475.9 699.0,474.4 700.4,472.8 701.9,471.2 703.3,469.5 704.8,467.7 706.2,465.9 707.7,464.0 709.1,462.1 710.6,460.2 712.0,458.2 713.5,456.3 714.9,454.3" fill="none" stroke="#0000ff" stroke-width="6" stroke-dasharray="1.6 3.7" clip-path="url(#cp387)"/><polyline points="424.7,470.1 426.1,468.1 427.6,466.1 429.0,464.1 430.5,462.2 431.9,460.3 433.4,458.5 434.8,456.6 436.3,454.9 437.7,453.2 439.2,451.5 440.6,450.0 442.1,448.5 443.5,447.1 445.0,445.8 446.4,444.6 447.9,443.5 449.3,442.4 450.8,441.5 452.2,440.8 453.7,440.1 455.1,439.5 456.6,439.1 458.0,438.8 459.5,438.6 460.9,438.6 462.4,438.6 463.8,438.8 465.3,439.1 466.7,439.5 468.2,440.1 469.7,440.8 471.1,441.5 472.6,442.4 474.0,443.5 475.5,444.6 476.9,445.8 478.4,447.1 479.8,448.5 481.3,450.0 482.7,451.5 484.2,453.2 485.6,454.9 487.1,456.6 488.5,458.5 490.0,460.3 491.4,462.2 492.9,464.1 494.3,466.1 495.8,468.1 497.2,470.1 498.7,472.0 500.1,474.0 501.6,476.0 503.0,477.9 504.5,479.8 505.9,481.6 507.4,483.5 508.8,485.2 510.3,486.9 511.7,488.6 513.2,490.1 514.6,491.6 516.1,493.0 517.5,494.3 519.0,495.5 520.5,496.6 521.9,497.7 523.4,498.6 524.8,499.3 526.3,500.0 527.7,500.6 529.2,501.0 530.6,501.3 532.1,501.5 533.5,501.6 535.0,501.5 536.4,501.3 537.9,501.0 539.3,500.6 540.8,500.0 542.2,499.3 543.7,498.6 545.1,497.7 546.6,496.6 548.0,495.5 549.5,494.3 550.9,493.0 552.4,491.6 553.8,490.1 555.3,488.6 556.7,486.9 558.2,485.2 559.6,483.5 561.1,481.6 562.5,479.8 564.0,477.9 565.4,476.0 566.9,474.0 568.3,472.0 569.8,470.1 571.3,468.1 572.7,466.1 574.2,464.1 575.6,462.2 577.1,460.3 578.5,458.5 580.0,456.6 581.4,454.9 582.9,453.2 584.3,451.5 585.8,450.0 587.2,448.5 588.7,447.1 590.1,445.8 591.6,444.6 593.0,443.5 594.5,442.4 595.9,441.5 597.4,440.8 598.8,440.1 600.3,439.5 601.7,439.1 603.2,438.8 604.6,438.6 606.1,438.6 607.5,438.6 609.0,438.8 610.4,439.1 611.9,439.5 613.3,440.1 614.8,440.8 616.2,441.5 617.7,442.4 619.1,443.5 620.6,444.6 622.1,445.8 623.5,447.1 625.0,448.5 626.4,450.0 627.9,451.5 629.3,453.2 630.8,454.9 632.2,456.6 633.7,458.5 635.1,460.3 636.6,462.2 638.0,464.1 639.5,466.1 640.9,468.1 642.4,470.1 643.8,472.0 645.3,474.0 646.7,476.0 648.2,477.9 649.6,479.8 651.1,481.6 652.5,483.5 654.0,485.2 655.4,486.9 656.9,488.6 658.3,490.1 659.8,491.6 661.2,493.0 662.7,494.3 664.1,495.5 665.6,496.6 667.0,497.7 668.5,498.6 669.9,499.3 671.4,500.0 672.9,500.6 674.3,501.0 675.8,501.3 677.2,501.5 678.7,501.6 680.1,501.5 681.6,501.3 683.0,501.0 684.5,500.6 685.9,500.0 687.4,499.3 688.8,498.6 690.3,497.7 691.7,496.6 693.2,495.5 694.6,494.3 696.1,493.0 697.5,491.6 699.0,490.1 700.4,488.6 701.9,486.9 703.3,485.2 704.8,483.5 706.2,481.6 707.7,479.8 709.1,477.9 710.6,476.0 712.0,474.0 713.5,472.0 714.9,470.1" fill="none" stroke="#0000ff" stroke-width="6" stroke-dasharray="6 2.5 1.4 2.5" clip-path="url(#cp387)"/><polyline points="424.7,485.8 426.1,483.8 427.6,481.9 429.0,479.9 430.5,478.0 431.9,476.1 433.4,474.2 434.8,472.4 436.3,470.6 437.7,468.9 439.2,467.3 440.6,465.7 442.1,464.2 443.5,462.8 445.0,461.5 446.4,460.3 447.9,459.2 449.3,458.2 450.8,457.3 452.2,456.5 453.7,455.8 455.1,455.3 456.6,454.9 458.0,454.5 459.5,454.4 460.9,454.3 462.4,454.4 463.8,454.5 465.3,454.9 466.7,455.3 468.2,455.8 469.7,456.5 471.1,457.3 472.6,458.2 474.0,459.2 475.5,460.3 476.9,461.5 478.4,462.8 479.8,464.2 481.3,465.7 482.7,467.3 484.2,468.9 485.6,470.6 487.1,472.4 488.5,474.2 490.0,476.1 491.4,478.0 492.9,479.9 494.3,481.9 495.8,483.8 497.2,485.8 498.7,487.8 500.1,489.7 501.6,491.7 503.0,493.6 504.5,495.5 505.9,497.4 507.4,499.2 508.8,501.0 510.3,502.7 511.7,504.3 513.2,505.9 514.6,507.4 516.1,508.8 517.5,510.1 519.0,511.3 520.5,512.4 521.9,513.4 523.4,514.3 524.8,515.1 526.3,515.8 527.7,516.3 529.2,516.7 530.6,517.1 532.1,517.2 533.5,517.3 535.0,517.2 536.4,517.1 537.9,516.7 539.3,516.3 540.8,515.8 542.2,515.1 543.7,514.3 545.1,513.4 546.6,512.4 548.0,511.3 549.5,510.1 550.9,508.8 552.4,507.4 553.8,505.9 555.3,504.3 556.7,502.7 558.2,501.0 559.6,499.2 561.1,497.4 562.5,495.5 564.0,493.6 565.4,491.7 566.9,489.7 568.3,487.8 569.8,485.8 571.3,483.8 572.7,481.9 574.2,479.9 575.6,478.0 577.1,476.1 578.5,474.2 580.0,472.4 581.4,470.6 582.9,468.9 584.3,467.3 585.8,465.7 587.2,464.2 588.7,462.8 590.1,461.5 591.6,460.3 593.0,459.2 594.5,458.2 595.9,457.3 597.4,456.5 598.8,455.8 600.3,455.3 601.7,454.9 603.2,454.5 604.6,454.4 606.1,454.3 607.5,454.4 609.0,454.5 610.4,454.9 611.9,455.3 613.3,455.8 614.8,456.5 616.2,457.3 617.7,458.2 619.1,459.2 620.6,460.3 622.1,461.5 623.5,462.8 625.0,464.2 626.4,465.7 627.9,467.3 629.3,468.9 630.8,470.6 632.2,472.4 633.7,474.2 635.1,476.1 636.6,478.0 638.0,479.9 639.5,481.9 640.9,483.8 642.4,485.8 643.8,487.8 645.3,489.7 646.7,491.7 648.2,493.6 649.6,495.5 651.1,497.4 652.5,499.2 654.0,501.0 655.4,502.7 656.9,504.3 658.3,505.9 659.8,507.4 661.2,508.8 662.7,510.1 664.1,511.3 665.6,512.4 667.0,513.4 668.5,514.3 669.9,515.1 671.4,515.8 672.9,516.3 674.3,516.7 675.8,517.1 677.2,517.2 678.7,517.3 680.1,517.2 681.6,517.1 683.0,516.7 684.5,516.3 685.9,515.8 687.4,515.1 688.8,514.3 690.3,513.4 691.7,512.4 693.2,511.3 694.6,510.1 696.1,508.8 697.5,507.4 699.0,505.9 700.4,504.3 701.9,502.7 703.3,501.0 704.8,499.2 706.2,497.4 707.7,495.5 709.1,493.6 710.6,491.7 712.0,489.7 713.5,487.8 714.9,485.8" fill="none" stroke="#0000ff" stroke-width="6" stroke-dasharray="6 2 1.3 2 1.3 2" clip-path="url(#cp387)"/><polyline points="424.7,501.6 426.1,499.6 427.6,497.6 429.0,495.6 430.5,493.7 431.9,491.8 433.4,490.0 434.8,488.1 436.3,486.4 437.7,484.7 439.2,483.0 440.6,481.5 442.1,480.0 443.5,478.6 445.0,477.3 446.4,476.1 447.9,475.0 449.3,473.9 450.8,473.0 452.2,472.3 453.7,471.6 455.1,471.0 456.6,470.6 458.0,470.3 459.5,470.1 460.9,470.1 462.4,470.1 463.8,470.3 465.3,470.6 466.7,471.0 468.2,471.6 469.7,472.3 471.1,473.0 472.6,473.9 474.0,475.0 475.5,476.1 476.9,477.3 478.4,478.6 479.8,480.0 481.3,481.5 482.7,483.0 484.2,484.7 485.6,486.4 487.1,488.1 488.5,490.0 490.0,491.8 491.4,493.7 492.9,495.6 494.3,497.6 495.8,499.6 497.2,501.6 498.7,503.5 500.1,505.5 501.6,507.5 503.0,509.4 504.5,511.3 505.9,513.1 507.4,515.0 508.8,516.7 510.3,518.4 511.7,520.1 513.2,521.6 514.6,523.1 516.1,524.5 517.5,525.8 519.0,527.0 520.5,528.1 521.9,529.2 523.4,530.1 524.8,530.8 526.3,531.5 527.7,532.1 529.2,532.5 530.6,532.8 532.1,533.0 533.5,533.0 535.0,533.0 536.4,532.8 537.9,532.5 539.3,532.1 540.8,531.5 542.2,530.8 543.7,530.1 545.1,529.2 546.6,528.1 548.0,527.0 549.5,525.8 550.9,524.5 552.4,523.1 553.8,521.6 555.3,520.1 556.7,518.4 558.2,516.7 559.6,515.0 561.1,513.1 562.5,511.3 564.0,509.4 565.4,507.5 566.9,505.5 568.3,503.5 569.8,501.6 571.3,499.6 572.7,497.6 574.2,495.6 575.6,493.7 577.1,491.8 578.5,490.0 580.0,488.1 581.4,486.4 582.9,484.7 584.3,483.0 585.8,481.5 587.2,480.0 588.7,478.6 590.1,477.3 591.6,476.1 593.0,475.0 594.5,473.9 595.9,473.0 597.4,472.3 598.8,471.6 600.3,471.0 601.7,470.6 603.2,470.3 604.6,470.1 606.1,470.1 607.5,470.1 609.0,470.3 610.4,470.6 611.9,471.0 613.3,471.6 614.8,472.3 616.2,473.0 617.7,473.9 619.1,475.0 620.6,476.1 622.1,477.3 623.5,478.6 625.0,480.0 626.4,481.5 627.9,483.0 629.3,484.7 630.8,486.4 632.2,488.1 633.7,490.0 635.1,491.8 636.6,493.7 638.0,495.6 639.5,497.6 640.9,499.6 642.4,501.6 643.8,503.5 645.3,505.5 646.7,507.5 648.2,509.4 649.6,511.3 651.1,513.1 652.5,515.0 654.0,516.7 655.4,518.4 656.9,520.1 658.3,521.6 659.8,523.1 661.2,524.5 662.7,525.8 664.1,527.0 665.6,528.1 667.0,529.2 668.5,530.1 669.9,530.8 671.4,531.5 672.9,532.1 674.3,532.5 675.8,532.8 677.2,533.0 678.7,533.0 680.1,533.0 681.6,532.8 683.0,532.5 684.5,532.1 685.9,531.5 687.4,530.8 688.8,530.1 690.3,529.2 691.7,528.1 693.2,527.0 694.6,525.8 696.1,524.5 697.5,523.1 699.0,521.6 700.4,520.1 701.9,518.4 703.3,516.7 704.8,515.0 706.2,513.1 707.7,511.3 709.1,509.4 710.6,507.5 712.0,505.5 713.5,503.5 714.9,501.6" fill="none" stroke="#0000ff" stroke-width="6" clip-path="url(#cp387)"/><rect x="425.5" y="262" width="290.0" height="289" fill="none" stroke="#000" stroke-width="1.6"/><path d="M431.5 551 v-5 M431.5 262 v5 M477.5 551 v-5 M477.5 262 v5 M524.5 551 v-5 M524.5 262 v5 M570.5 551 v-5 M570.5 262 v5 M616.5 551 v-5 M616.5 262 v5 M662.5 551 v-5 M662.5 262 v5 M708.5 551 v-5 M708.5 262 v5 M425.5 265.5 h6 M715.5 265.5 h-6 M425.5 297.5 h6 M715.5 297.5 h-6 M425.5 328.5 h6 M715.5 328.5 h-6 M425.5 360.5 h6 M715.5 360.5 h-6 M425.5 391.5 h6 M715.5 391.5 h-6 M425.5 423.5 h6 M715.5 423.5 h-6 M425.5 454.5 h6 M715.5 454.5 h-6 M425.5 486.5 h6 M715.5 486.5 h-6 M425.5 517.5 h6 M715.5 517.5 h-6 M425.5 549.5 h6 M715.5 549.5 h-6" stroke="#000" fill="none"/><text x="431.2" y="567" font-family="Liberation Sans" font-size="10.2" text-anchor="middle" fill="#111">-6</text><text x="477.4" y="567" font-family="Liberation Sans" font-size="10.2" text-anchor="middle" fill="#111">-4</text><text x="523.6" y="567" font-family="Liberation Sans" font-size="10.2" text-anchor="middle" fill="#111">-2</text><text x="569.8" y="567" font-family="Liberation Sans" font-size="10.2" text-anchor="middle" fill="#111">0</text><text x="616.0" y="567" font-family="Liberation Sans" font-size="10.2" text-anchor="middle" fill="#111">2</text><text x="662.2" y="567" font-family="Liberation Sans" font-size="10.2" text-anchor="middle" fill="#111">4</text><text x="708.4" y="567" font-family="Liberation Sans" font-size="10.2" text-anchor="middle" fill="#111">6</text><text x="419.5" y="268.8" font-family="Liberation Sans" font-size="10.2" text-anchor="end" fill="#111">4</text><text x="419.5" y="300.3" font-family="Liberation Sans" font-size="10.2" text-anchor="end" fill="#111">3</text><text x="419.5" y="331.8" font-family="Liberation Sans" font-size="10.2" text-anchor="end" fill="#111">2</text><text x="419.5" y="363.3" font-family="Liberation Sans" font-size="10.2" text-anchor="end" fill="#111">1</text><text x="419.5" y="394.8" font-family="Liberation Sans" font-size="10.2" text-anchor="end" fill="#111">0</text><text x="419.5" y="426.3" font-family="Liberation Sans" font-size="10.2" text-anchor="end" fill="#111">-1</text><text x="419.5" y="457.8" font-family="Liberation Sans" font-size="10.2" text-anchor="end" fill="#111">-2</text><text x="419.5" y="489.3" font-family="Liberation Sans" font-size="10.2" text-anchor="end" fill="#111">-3</text><text x="419.5" y="520.8" font-family="Liberation Sans" font-size="10.2" text-anchor="end" fill="#111">-4</text><text x="419.5" y="552.3" font-family="Liberation Sans" font-size="10.2" text-anchor="end" fill="#111">-5</text><text x="570.5" y="584" font-family="Liberation Sans" font-size="10.2" text-anchor="middle" fill="#111">x</text><text transform="translate(400.5 406.5) rotate(-90)" font-family="Liberation Sans" font-size="10.2" text-anchor="middle" fill="#111">y</text><text x="670.5" y="276.7" font-family="Liberation Sans" font-size="10.2" text-anchor="end" fill="#111">solid</text><path d="M675.5 273.5 H703.5" stroke="#0000ff" stroke-width="6"/><text x="670.5" y="288.7" font-family="Liberation Sans" font-size="10.2" text-anchor="end" fill="#111">dots</text><path d="M675.5 285.5 H703.5" stroke="#0000ff" stroke-width="6" stroke-dasharray="1.8 4.2"/><text x="670.5" y="300.7" font-family="Liberation Sans" font-size="10.2" text-anchor="end" fill="#111">dashes</text><path d="M675.5 297.5 H703.5" stroke="#0000ff" stroke-width="6" stroke-dasharray="4.5 8.3"/><text x="670.5" y="312.7" font-family="Liberation Sans" font-size="10.2" text-anchor="end" fill="#111">short_dashes</text><path d="M675.5 309.5 H703.5" stroke="#0000ff" stroke-width="6" stroke-dasharray="1.8 4.2"/><text x="670.5" y="324.7" font-family="Liberation Sans" font-size="10.2" text-anchor="end" fill="#111">short_long_dashes</text><path d="M675.5 321.5 H703.5" stroke="#0000ff" stroke-width="6" stroke-dasharray="7.5 4.3 1.7 4.3"/><text x="670.5" y="336.7" font-family="Liberation Sans" font-size="10.2" text-anchor="end" fill="#111">short_short_long_dashes</text><path d="M675.5 333.5 H703.5" stroke="#0000ff" stroke-width="6" stroke-dasharray="7.8 4 1.4 3.8 1.4 4"/><text x="670.5" y="348.7" font-family="Liberation Sans" font-size="10.2" text-anchor="end" fill="#111">dot_dash</text><path d="M675.5 345.5 H703.5" stroke="#0000ff" stroke-width="6"/></svg>
</div></div>
<div class="a" style="left:730px;top:72px;width:17px;height:580px;background:#eae8e3;background-image:conic-gradient(#fff 25%,#d4d0c8 0 50%,#fff 0 75%,#d4d0c8 0);background-size:2px 2px"></div>
<div class="a" style="left:730px;top:72px;width:17px;height:2px;background:#606060"></div>
<div class="a" style="left:730px;top:74px;width:17px;height:15px;background:#d4d0c8;border:1px solid #404040"></div>
<div class="a" style="left:733px;top:80px;width:12px;height:1px;background:#fff"></div><div class="a" style="left:733px;top:82px;width:12px;height:1px;background:#808080"></div>
<svg style="left:736px;top:76px" width="6" height="12"><path d="M3 0.5 L5.5 3 H0.5 Z M3 11 L5.5 8.5 H0.5 Z" fill="#8a877f"/></svg>
<div class="a" style="left:730px;top:89px;width:17px;height:17px;background:#d4d0c8;border:1px solid;border-color:#d4d0c8 #404040 #404040 #d4d0c8;box-shadow:inset 1px 1px 0 #fff,inset -1px -1px 0 #808080"></div>
<svg style="left:735px;top:95px" width="8" height="5"><path d="M4 0 L8 4.5 H0 Z" fill="#000"/></svg>
<div class="a" style="left:730px;top:106px;width:17px;height:235px;background:#d4d0c8;border:1px solid;border-color:#d4d0c8 #404040 #404040 #d4d0c8;box-shadow:inset 1px 1px 0 #fff,inset -1px -1px 0 #808080"></div>
<div class="a" style="left:747px;top:72px;width:2px;height:580px;background:#e9e7e2"></div>
<div class="a" style="left:749px;top:72px;width:145px;height:570px;background:#d4d0c8;border-left:1px solid #000;border-right:1px solid #404040"></div>
<div class="a" style="left:749px;top:72px;width:145px;height:1px;background:#000"></div>
<div class="a" style="left:751px;top:73px;width:142px;height:15px;background:linear-gradient(#b7caf0,#eaf0fa)"></div>
<div class="t" style="left:752px;top:74px;font:bold 12.5px 'Liberation Serif',serif;line-height:1;color:#000;letter-spacing:-0.572px;">Arithmetik</div>
<div class="a" style="left:882px;top:76px;width:9px;height:9px;background:#fff;border:1px solid #000"></div><div class="a" style="left:884px;top:80px;width:5px;height:1px;background:#000"></div>
<div class="t" style="left:740.4px;width:40px;text-align:center;top:90.2px;font:16px 'Liberation Serif',serif;line-height:1;">∞</div>
<div class="t" style="left:764.4px;width:40px;text-align:center;top:91.2px;font:15px 'Liberation Serif',serif;line-height:1;">π</div>
<div class="t" style="left:788.5px;width:40px;text-align:center;top:91.8px;font:14px 'Liberation Serif',serif;line-height:1;">i</div>
<div class="t" style="left:812.5px;width:40px;text-align:center;top:91.8px;font:14px 'Liberation Serif',serif;line-height:1;">±</div>
<svg style="left:849px;top:91px" width="16" height="14" viewBox="0 0 16 14"><rect x="4" y="7" width="4" height="5"/><rect x="9" y="2" width="3" height="4"/></svg>
<div class="t" style="left:860.6px;width:40px;text-align:center;top:88.2px;font:16px 'Liberation Serif',serif;line-height:1;font-weight:bold">←</div>
<div class="t" style="left:740.4px;width:40px;text-align:center;top:111.8px;font:14px 'Liberation Serif',serif;line-height:1;">7</div>
<div class="t" style="left:764.4px;width:40px;text-align:center;top:111.8px;font:14px 'Liberation Serif',serif;line-height:1;">8</div>
<div class="t" style="left:788.5px;width:40px;text-align:center;top:111.8px;font:14px 'Liberation Serif',serif;line-height:1;">9</div>
<div class="t" style="left:812.5px;width:40px;text-align:center;top:111.2px;font:15px 'Liberation Serif',serif;line-height:1;">+</div>
<svg style="left:849px;top:111px" width="16" height="14" viewBox="0 0 16 14"><text x="1" y="11" font-family="Liberation Sans" font-size="12">(</text><rect x="6" y="4.5" width="4" height="5"/><text x="11" y="11" font-family="Liberation Sans" font-size="12">)</text></svg>
<svg style="left:873px;top:111px" width="16" height="14" viewBox="0 0 16 14"><path d="M3.5 1V13 M12.5 1V13" stroke="#000"/><rect x="6" y="4.5" width="4" height="5"/></svg>
<div class="t" style="left:740.4px;width:40px;text-align:center;top:131.8px;font:14px 'Liberation Serif',serif;line-height:1;">4</div>
<div class="t" style="left:764.4px;width:40px;text-align:center;top:131.8px;font:14px 'Liberation Serif',serif;line-height:1;">5</div>
<div class="t" style="left:788.5px;width:40px;text-align:center;top:131.8px;font:14px 'Liberation Serif',serif;line-height:1;">6</div>
<div class="t" style="left:812.5px;width:40px;text-align:center;top:131.2px;font:15px 'Liberation Serif',serif;line-height:1;">−</div>
<svg style="left:849px;top:131px" width="16" height="14" viewBox="0 0 16 14"><path d="M2 8 L4 7 L6 12 L8.5 2.5 H13" fill="none" stroke="#000"/><rect x="9.5" y="5" width="3" height="6"/></svg>
<svg style="left:873px;top:131px" width="16" height="14" viewBox="0 0 16 14"><rect x="1" y="1" width="3" height="4.5"/><path d="M2 9 L4 8 L6 12.5 L8.5 2.5 H14" fill="none" stroke="#000"/><rect x="10" y="5" width="3" height="6"/></svg>
<div class="t" style="left:740.4px;width:40px;text-align:center;top:151.8px;font:14px 'Liberation Serif',serif;line-height:1;">1</div>
<div class="t" style="left:764.4px;width:40px;text-align:center;top:151.8px;font:14px 'Liberation Serif',serif;line-height:1;">2</div>
<div class="t" style="left:788.5px;width:40px;text-align:center;top:151.8px;font:14px 'Liberation Serif',serif;line-height:1;">3</div>
<div class="t" style="left:812.5px;width:40px;text-align:center;top:151.4px;font:13px 'Liberation Serif',serif;line-height:1;">×</div>
<div class="t" style="left:836.6px;width:40px;text-align:center;top:151.8px;font:14px 'Liberation Serif',serif;line-height:1;">;</div>
<div class="t" style="left:860.6px;width:40px;text-align:center;top:148.2px;font:16px 'Liberation Serif',serif;line-height:1;font-weight:bold">→</div>
<div class="t" style="left:740.4px;width:40px;text-align:center;top:171.3px;font:14px 'Liberation Serif',serif;line-height:1;">,</div>
<div class="t" style="left:764.4px;width:40px;text-align:center;top:171.3px;font:14px 'Liberation Serif',serif;line-height:1;">0</div>
<div class="t" style="left:788.5px;width:40px;text-align:center;top:171.3px;font:14px 'Liberation Serif',serif;line-height:1;">!</div>
<div class="t" style="left:812.5px;width:40px;text-align:center;top:171.3px;font:14px 'Liberation Sans',sans-serif;line-height:1;">/</div>
<svg style="left:849px;top:170px" width="16" height="14" viewBox="0 0 16 14"><rect x="3" y="5" width="1.5" height="1.5"/><rect x="3" y="8.5" width="1.5" height="1.5"/><path d="M6 5.7H12 M6 9.2H12" stroke="#000" stroke-width="1.2"/></svg>
<div class="t" style="left:860.6px;width:40px;text-align:center;top:170.8px;font:15px 'Liberation Serif',serif;line-height:1;">=</div>
<div class="a" style="left:749px;top:188px;width:145px;height:1px;background:#000"></div>
<div class="a" style="left:751px;top:189px;width:142px;height:15px;background:linear-gradient(#b7caf0,#eaf0fa)"></div>
<div class="t" style="left:752px;top:190px;font:bold 12.5px 'Liberation Serif',serif;line-height:1;color:#000;letter-spacing:-0.598px;">Matrizen</div>
<div class="a" style="left:882px;top:192px;width:9px;height:9px;background:#fff;border:1px solid #000"></div><div class="a" style="left:884px;top:196px;width:5px;height:1px;background:#000"></div>
<svg style="left:752px;top:206px" width="16" height="14" viewBox="0 0 16 14"><path d="M4.5 1.5 C2 4 2 10 4.5 12.5 M11.5 1.5 C14 4 14 10 11.5 12.5" fill="none" stroke="#000" stroke-width="1.1"/><g><rect x="5.5" y="3.5" width="2" height="2.5"/><rect x="8.7" y="3.5" width="2" height="2.5"/><rect x="5.5" y="8" width="2" height="2.5"/><rect x="8.7" y="8" width="2" height="2.5"/></g></svg>
<svg style="left:776px;top:206px" width="16" height="14" viewBox="0 0 16 14"><path d="M3.5 1V13 M12.5 1V13" stroke="#000"/><rect x="6" y="4.5" width="4" height="5"/></svg>
<svg style="left:800px;top:206px" width="16" height="14" viewBox="0 0 16 14"><rect x="3" y="7" width="4" height="5"/><path d="M8 3.5H13 M10.5 3.5V8" stroke="#000"/></svg>
<svg style="left:825px;top:206px" width="16" height="14" viewBox="0 0 16 14"><text x="0" y="11.5" font-family="Liberation Sans" font-size="11">A</text><rect x="8" y="9" width="2" height="3.5"/><rect x="11.5" y="5" width="3" height="5"/></svg>
<svg style="left:849px;top:206px" width="16" height="14" viewBox="0 0 16 14"><text x="0" y="11.5" font-family="Liberation Sans" font-size="11">M</text><rect x="9" y="9" width="2" height="3.5"/><rect x="12" y="5" width="3" height="5"/></svg>
<svg style="left:873px;top:206px" width="16" height="14" viewBox="0 0 16 14"><path d="M3.5 3.5H12.5 M10.5 1.5 L13 3.5 L10.5 5.5 M5 6.5 L11 12 M11 6.5 L5 12" fill="none" stroke="#000"/></svg>
<div class="a" style="left:749px;top:224px;width:145px;height:1px;background:#000"></div>
<div class="a" style="left:751px;top:225px;width:142px;height:15px;background:linear-gradient(#b7caf0,#eaf0fa)"></div>
<div class="t" style="left:752px;top:226px;font:bold 12.5px 'Liberation Serif',serif;line-height:1;color:#000;letter-spacing:-0.592px;">Boolesch</div>
<div class="a" style="left:882px;top:228px;width:9px;height:9px;background:#fff;border:1px solid #000"></div><div class="a" style="left:884px;top:232px;width:5px;height:1px;background:#000"></div>
<svg style="left:752px;top:243px" width="16" height="14" viewBox="0 0 16 14"><rect x="3" y="4" width="10" height="2"/><rect x="3" y="8" width="10" height="2"/></svg>
<div class="t" style="left:764.4px;width:40px;text-align:center;top:242.2px;font:15px 'Liberation Serif',serif;line-height:1;font-weight:bold">&lt;</div>
<div class="t" style="left:788.5px;width:40px;text-align:center;top:242.2px;font:15px 'Liberation Serif',serif;line-height:1;font-weight:bold">&gt;</div>
<div class="t" style="left:812.5px;width:40px;text-align:center;top:241.8px;font:15px 'Liberation Serif',serif;line-height:1;">≤</div>
<div class="t" style="left:836.6px;width:40px;text-align:center;top:241.8px;font:15px 'Liberation Serif',serif;line-height:1;">≥</div>
<div class="t" style="left:860.6px;width:40px;text-align:center;top:241.1px;font:17px 'Liberation Serif',serif;line-height:1;">≠</div>
<div class="t" style="left:740.4px;width:40px;text-align:center;top:261.2px;font:16px 'Liberation Serif',serif;line-height:1;">¬</div>
<div class="t" style="left:764.4px;width:40px;text-align:center;top:262.3px;font:14px 'DejaVu Sans Light','DejaVu Sans',sans-serif;line-height:1;">∧</div>
<div class="t" style="left:788.5px;width:40px;text-align:center;top:262.3px;font:14px 'DejaVu Sans Light','DejaVu Sans',sans-serif;line-height:1;">∨</div>
<div class="t" style="left:812.5px;width:40px;text-align:center;top:261.8px;font:15px 'DejaVu Sans Light','DejaVu Sans',sans-serif;line-height:1;">⊕</div>
<div class="a" style="left:749px;top:280px;width:145px;height:1px;background:#000"></div>
<div class="a" style="left:751px;top:281px;width:142px;height:15px;background:linear-gradient(#b7caf0,#eaf0fa)"></div>
<div class="t" style="left:752px;top:282px;font:bold 12.5px 'Liberation Serif',serif;line-height:1;color:#000;letter-spacing:-0.634px;">Funktionen</div>
<div class="a" style="left:882px;top:284px;width:9px;height:9px;background:#fff;border:1px solid #000"></div><div class="a" style="left:884px;top:288px;width:5px;height:1px;background:#000"></div>
<div class="t" style="left:752.1px;top:299.2px;font:13.5px 'Liberation Serif',serif;line-height:1;color:#000;letter-spacing:-0.022px;">log</div>
<div class="t" style="left:774.7px;top:299.2px;font:13.5px 'Liberation Serif',serif;line-height:1;color:#000;letter-spacing:-0.079px;">sign</div>
<div class="t" style="left:801.6px;top:299.2px;font:13.5px 'Liberation Serif',serif;line-height:1;color:#000;letter-spacing:-0.189px;">sin</div>
<div class="t" style="left:824.4px;top:299.2px;font:13.5px 'Liberation Serif',serif;line-height:1;color:#000;letter-spacing:0.000px;">cos</div>
<svg style="left:849px;top:299px" width="16" height="14" viewBox="0 0 16 14"><path d="M3 8.5H13" stroke="#000"/><path d="M4.5 6 H11.5 M4.5 3.5H11.5" stroke="#000" stroke-dasharray="2 1"/><rect x="4" y="10.5" width="2" height="2.5"/><rect x="10" y="10.5" width="2" height="2.5"/><rect x="7" y="1" width="2" height="2"/></svg>
<svg style="left:873px;top:299px" width="16" height="14" viewBox="0 0 16 14"><path d="M3.5 3.5 H12.5 M5.5 3.5 V10 M10.5 3.5 V10" stroke="#000"/><rect x="3" y="10.5" width="2" height="2.5"/><rect x="7" y="10.5" width="2" height="2.5"/><rect x="11" y="10.5" width="2" height="2.5"/><rect x="7" y="0.5" width="2" height="2"/></svg>
<div class="t" style="left:755.1px;top:319.2px;font:13.5px 'Liberation Serif',serif;line-height:1;color:#000;letter-spacing:-0.408px;">ln</div>
<div class="t" style="left:776.3px;top:319.2px;font:13.5px 'Liberation Serif',serif;line-height:1;color:#000;letter-spacing:-0.067px;">arg</div>
<div class="t" style="left:800.2px;top:319.2px;font:13.5px 'Liberation Serif',serif;line-height:1;color:#000;letter-spacing:0.033px;">tan</div>
<div class="t" style="left:824.4px;top:319.2px;font:13.5px 'Liberation Serif',serif;line-height:1;color:#000;letter-spacing:0.033px;">cot</div>
<svg style="left:849px;top:319px" width="16" height="14" viewBox="0 0 16 14"><path d="M3 7.5H13" stroke="#000"/><path d="M8 1V6" stroke="#000" stroke-width="2"/><rect x="4" y="9" width="3" height="4"/><rect x="9" y="9" width="3" height="4"/></svg>
<svg style="left:873px;top:319px" width="16" height="14" viewBox="0 0 16 14"><path d="M7.5 1V13 M7.5 3 C12 3 12 10 7.5 10" fill="none" stroke="#000"/><rect x="4" y="5" width="2" height="2"/><rect x="10" y="6" width="2" height="2"/></svg>
<div class="t" style="left:752.1px;top:339.2px;font:13.5px 'Liberation Serif',serif;line-height:1;color:#000;letter-spacing:-1.233px;">exp</div>
<div class="t" style="left:764.4px;width:40px;text-align:center;top:340.5px;font:12px 'Liberation Serif',serif;line-height:1;">%</div>
<div class="t" style="left:804.6px;top:339.2px;font:13.5px 'Liberation Serif',serif;line-height:1;color:#000;letter-spacing:-0.625px;">el</div>
<svg style="left:825px;top:339px" width="16" height="14" viewBox="0 0 16 14"><path d="M7.5 1.5 C4 4 4 10 7.5 12.5" fill="none" stroke="#000"/><rect x="9" y="2.5" width="2" height="2"/><rect x="9" y="6" width="2" height="2"/><rect x="9" y="9.5" width="2" height="2"/></svg>
<div class="a" style="left:749px;top:356px;width:145px;height:1px;background:#000"></div>
<div class="a" style="left:751px;top:357px;width:142px;height:15px;background:linear-gradient(#b7caf0,#eaf0fa)"></div>
<div class="t" style="left:752px;top:358px;font:bold 12.5px 'Liberation Serif',serif;line-height:1;color:#000;letter-spacing:-0.628px;">Diagramm</div>
<div class="a" style="left:882px;top:360px;width:9px;height:9px;background:#fff;border:1px solid #000"></div><div class="a" style="left:884px;top:364px;width:5px;height:1px;background:#000"></div>
<svg style="left:752px;top:375px" width="16" height="14" viewBox="0 0 16 14"><path d="M5 3.6 A4.8 4.8 0 1 1 6.2 11.4" fill="none" stroke="#000" stroke-width="1.5"/><path d="M2.4 9.4 L6.8 7.4 L6.8 11.9 Z"/></svg>
<svg style="left:776px;top:375px" width="16" height="14" viewBox="0 0 16 14"><path d="M8.3 0.8 L13.8 6 H2.8 Z M8.3 13.4 L5.3 10.3 H11.3 Z"/><path d="M8.3 5V11 M5 8.3H11.6" stroke="#000" stroke-width="1.8"/></svg>
<svg style="left:800px;top:375px" width="16" height="14" viewBox="0 0 16 14"><path d="M8.5 0.5V13 M2 6.7H15" stroke="#000"/><path d="M6.3 2.7 L8.5 0.3 L10.7 2.7 M6.3 10.8 L8.5 13.2 L10.7 10.8 M4.2 4.5 L1.8 6.7 L4.2 8.9 M12.8 4.5 L15.2 6.7 L12.8 8.9" fill="none" stroke="#000"/></svg>
<svg style="left:825px;top:375px" width="16" height="14" viewBox="0 0 16 14"><path d="M4 4.5H14 M4 6.5H14 M4 8.5H14 M4 10.5H14" stroke="#555" stroke-dasharray="1 1" shape-rendering="crispEdges"/></svg>
<svg style="left:849px;top:375px" width="16" height="14" viewBox="0 0 16 14"><path d="M3 4.5H13 M3 7.5H13 M3 10.5H13" stroke="#000" stroke-width="1.2" shape-rendering="crispEdges"/></svg>
<svg style="left:873px;top:375px" width="16" height="14" viewBox="0 0 16 14"><path d="M4 5.5 A5 4.6 0 0 1 12.5 4 M13 8.5 A5 4.6 0 0 1 4.5 10" fill="none" stroke="#000" stroke-width="1.4"/><path d="M10.3 5.3 L14.8 6.6 L14 2 Z M6.7 8.7 L2.2 7.4 L3 12 Z"/></svg>
<div class="a" style="left:749px;top:392px;width:145px;height:1px;background:#000"></div>
<div class="a" style="left:751px;top:393px;width:142px;height:15px;background:linear-gradient(#b7caf0,#eaf0fa)"></div>
<div class="t" style="left:752px;top:394px;font:bold 12.5px 'Liberation Serif',serif;line-height:1;color:#000;letter-spacing:-0.629px;">Programmierung</div>
<div class="a" style="left:882px;top:396px;width:9px;height:9px;background:#fff;border:1px solid #000"></div><div class="a" style="left:884px;top:400px;width:5px;height:1px;background:#000"></div>
<div class="t" style="left:757px;top:411.2px;font:13.5px 'Liberation Serif',serif;line-height:1;color:#000;letter-spacing:-0.525px;">if</div>
<div class="t" style="left:782.4px;top:411.2px;font:13.5px 'Liberation Serif',serif;line-height:1;color:#000;letter-spacing:-0.680px;">while</div>
<div class="t" style="left:824.8px;top:411.2px;font:13.5px 'Liberation Serif',serif;line-height:1;color:#000;letter-spacing:-0.517px;">for</div>
<div class="t" style="left:860px;top:411.2px;font:13.5px 'Liberation Serif',serif;line-height:1;color:#000;letter-spacing:-0.638px;">line</div>
<div class="t" style="left:758.5px;top:431.2px;font:13.5px 'Liberation Serif',serif;line-height:1;color:#000;letter-spacing:-0.337px;">break</div>
<div class="t" style="left:810.7px;top:431.2px;font:13.5px 'Liberation Serif',serif;line-height:1;color:#000;letter-spacing:-0.150px;">continue</div>
<div class="a" style="left:749px;top:448px;width:145px;height:1px;background:#000"></div>
<div class="a" style="left:751px;top:449px;width:142px;height:15px;background:linear-gradient(#b7caf0,#eaf0fa)"></div>
<div class="t" style="left:752px;top:450px;font:bold 12.5px 'Liberation Serif',serif;line-height:1;color:#000;letter-spacing:-0.660px;">Symbole (α-ω)</div>
<div class="a" style="left:882px;top:452px;width:9px;height:9px;background:#fff;border:1px solid #000"></div><div class="a" style="left:884px;top:456px;width:5px;height:1px;background:#000"></div>
<div class="t" style="left:740.4px;width:40px;text-align:center;top:468.2px;font:15px 'Liberation Serif',serif;line-height:1;">α</div>
<div class="t" style="left:764.4px;width:40px;text-align:center;top:468.2px;font:15px 'Liberation Serif',serif;line-height:1;">β</div>
<div class="t" style="left:788.5px;width:40px;text-align:center;top:468.2px;font:15px 'Liberation Serif',serif;line-height:1;">γ</div>
<div class="t" style="left:812.5px;width:40px;text-align:center;top:468.2px;font:15px 'Liberation Serif',serif;line-height:1;">δ</div>
<div class="t" style="left:836.6px;width:40px;text-align:center;top:468.2px;font:15px 'Liberation Serif',serif;line-height:1;">ε</div>
<div class="t" style="left:860.6px;width:40px;text-align:center;top:468.2px;font:15px 'Liberation Serif',serif;line-height:1;">ζ</div>
<div class="t" style="left:740.4px;width:40px;text-align:center;top:487.9px;font:15px 'Liberation Serif',serif;line-height:1;">η</div>
<div class="t" style="left:764.4px;width:40px;text-align:center;top:487.9px;font:15px 'Liberation Serif',serif;line-height:1;">θ</div>
<div class="t" style="left:788.5px;width:40px;text-align:center;top:487.9px;font:15px 'Liberation Serif',serif;line-height:1;">ι</div>
<div class="t" style="left:812.5px;width:40px;text-align:center;top:487.9px;font:15px 'Liberation Serif',serif;line-height:1;">κ</div>
<div class="t" style="left:836.6px;width:40px;text-align:center;top:487.9px;font:15px 'Liberation Serif',serif;line-height:1;">λ</div>
<div class="t" style="left:860.6px;width:40px;text-align:center;top:487.9px;font:15px 'Liberation Serif',serif;line-height:1;">μ</div>
<div class="t" style="left:740.4px;width:40px;text-align:center;top:507.6px;font:15px 'Liberation Serif',serif;line-height:1;">ν</div>
<div class="t" style="left:764.4px;width:40px;text-align:center;top:507.6px;font:15px 'Liberation Serif',serif;line-height:1;">ξ</div>
<div class="t" style="left:788.5px;width:40px;text-align:center;top:507.6px;font:15px 'Liberation Serif',serif;line-height:1;">ο</div>
<div class="t" style="left:812.5px;width:40px;text-align:center;top:507.6px;font:15px 'Liberation Serif',serif;line-height:1;">π</div>
<div class="t" style="left:836.6px;width:40px;text-align:center;top:507.6px;font:15px 'Liberation Serif',serif;line-height:1;">ρ</div>
<div class="t" style="left:860.6px;width:40px;text-align:center;top:507.6px;font:15px 'Liberation Serif',serif;line-height:1;">σ</div>
<div class="t" style="left:740.4px;width:40px;text-align:center;top:527.4px;font:15px 'Liberation Serif',serif;line-height:1;">τ</div>
<div class="t" style="left:764.4px;width:40px;text-align:center;top:527.4px;font:15px 'Liberation Serif',serif;line-height:1;">υ</div>
<div class="t" style="left:788.5px;width:40px;text-align:center;top:527.4px;font:15px 'Liberation Serif',serif;line-height:1;">φ</div>
<div class="t" style="left:812.5px;width:40px;text-align:center;top:527.4px;font:15px 'Liberation Serif',serif;line-height:1;">χ</div>
<div class="t" style="left:836.6px;width:40px;text-align:center;top:527.4px;font:15px 'Liberation Serif',serif;line-height:1;">ψ</div>
<div class="t" style="left:860.6px;width:40px;text-align:center;top:527.4px;font:15px 'Liberation Serif',serif;line-height:1;">ω</div>
<div class="a" style="left:749px;top:544px;width:145px;height:1px;background:#000"></div>
<div class="a" style="left:751px;top:545px;width:142px;height:15px;background:linear-gradient(#b7caf0,#eaf0fa)"></div>
<div class="t" style="left:752px;top:546px;font:bold 12.5px 'Liberation Serif',serif;line-height:1;color:#000;letter-spacing:-0.654px;">Symbole (Α-Ω)</div>
<div class="a" style="left:882px;top:548px;width:9px;height:9px;background:#fff;border:1px solid #000"></div><div class="a" style="left:884px;top:552px;width:5px;height:1px;background:#000"></div>
<div class="t" style="left:740.4px;width:40px;text-align:center;top:563.1px;font:14.5px 'Liberation Serif',serif;line-height:1;">Α</div>
<div class="t" style="left:764.4px;width:40px;text-align:center;top:563.1px;font:14.5px 'Liberation Serif',serif;line-height:1;">Β</div>
<div class="t" style="left:788.5px;width:40px;text-align:center;top:563.1px;font:14.5px 'Liberation Serif',serif;line-height:1;">Γ</div>
<div class="t" style="left:812.5px;width:40px;text-align:center;top:563.1px;font:14.5px 'Liberation Serif',serif;line-height:1;">Δ</div>
<div class="t" style="left:836.6px;width:40px;text-align:center;top:563.1px;font:14.5px 'Liberation Serif',serif;line-height:1;">Ε</div>
<div class="t" style="left:860.6px;width:40px;text-align:center;top:563.1px;font:14.5px 'Liberation Serif',serif;line-height:1;">Ζ</div>
<div class="t" style="left:740.4px;width:40px;text-align:center;top:583.1px;font:14.5px 'Liberation Serif',serif;line-height:1;">Η</div>
<div class="t" style="left:764.4px;width:40px;text-align:center;top:583.1px;font:14.5px 'Liberation Serif',serif;line-height:1;">Θ</div>
<div class="t" style="left:788.5px;width:40px;text-align:center;top:583.1px;font:14.5px 'Liberation Serif',serif;line-height:1;">Ι</div>
<div class="t" style="left:812.5px;width:40px;text-align:center;top:583.1px;font:14.5px 'Liberation Serif',serif;line-height:1;">Κ</div>
<div class="t" style="left:836.6px;width:40px;text-align:center;top:583.1px;font:14.5px 'Liberation Serif',serif;line-height:1;">Λ</div>
<div class="t" style="left:860.6px;width:40px;text-align:center;top:583.1px;font:14.5px 'Liberation Serif',serif;line-height:1;">Μ</div>
<div class="t" style="left:740.4px;width:40px;text-align:center;top:603.1px;font:14.5px 'Liberation Serif',serif;line-height:1;">Ν</div>
<div class="t" style="left:764.4px;width:40px;text-align:center;top:603.1px;font:14.5px 'Liberation Serif',serif;line-height:1;">Ξ</div>
<div class="t" style="left:788.5px;width:40px;text-align:center;top:603.1px;font:14.5px 'Liberation Serif',serif;line-height:1;">Ο</div>
<div class="t" style="left:812.5px;width:40px;text-align:center;top:603.1px;font:14.5px 'Liberation Serif',serif;line-height:1;">Π</div>
<div class="t" style="left:836.6px;width:40px;text-align:center;top:603.1px;font:14.5px 'Liberation Serif',serif;line-height:1;">Ρ</div>
<div class="t" style="left:860.6px;width:40px;text-align:center;top:603.1px;font:14.5px 'Liberation Serif',serif;line-height:1;">Σ</div>
<div class="t" style="left:740.4px;width:40px;text-align:center;top:623.1px;font:14.5px 'Liberation Serif',serif;line-height:1;">Τ</div>
<div class="t" style="left:764.4px;width:40px;text-align:center;top:623.1px;font:14.5px 'Liberation Serif',serif;line-height:1;">Υ</div>
<div class="t" style="left:788.5px;width:40px;text-align:center;top:623.1px;font:14.5px 'Liberation Serif',serif;line-height:1;">Φ</div>
<div class="t" style="left:812.5px;width:40px;text-align:center;top:623.1px;font:14.5px 'Liberation Serif',serif;line-height:1;">Χ</div>
<div class="t" style="left:836.6px;width:40px;text-align:center;top:623.1px;font:14.5px 'Liberation Serif',serif;line-height:1;">Ψ</div>
<div class="t" style="left:860.6px;width:40px;text-align:center;top:623.1px;font:14.5px 'Liberation Serif',serif;line-height:1;">Ω</div>
<div class="a" style="left:749px;top:641px;width:145px;height:1px;background:#000"></div>
<div class="a" style="left:12px;top:652px;width:892px;height:189px;background:#d4d0c8"></div>
<div class="a" style="left:12px;top:652px;width:892px;height:1px;background:#e4e2dc"></div><div class="a" style="left:13px;top:653px;width:891px;height:1px;background:#fff"></div>
<div class="a" style="left:12px;top:652px;width:1px;height:189px;background:#e4e2dc"></div><div class="a" style="left:13px;top:653px;width:1px;height:188px;background:#fff"></div>
<div class="a" style="left:16px;top:656px;width:888px;height:18px;background:linear-gradient(90deg,#0a246a,#a6caf0 105%)"></div>
<div class="t" style="left:35.6px;top:659.5px;font:bold 12px 'Liberation Sans',sans-serif;line-height:1;color:#fff;letter-spacing:0.244px;">C:\Users\Kraska\AppData\Roaming\SMath\extensions\plugins\44011c1e-5d0d-4533-8e68-e32b5badce41\maxima.xml - Notepad++</div>
<svg style="left:18px;top:657px" width="17" height="16" viewBox="0 0 17 16"><defs><linearGradient id="gg" x1="0" y1="0" x2="0" y2="1"><stop offset="0" stop-color="#d8e84a"/><stop offset="1" stop-color="#2a9a2a"/></linearGradient></defs><path d="M0.5 0.5 H9.5 L12.5 3.5 V15 H0.5 Z" fill="#fff" stroke="#8a8a8a"/><path d="M2 1.5V2.5 M4 1.5V2.5 M6 1.5V2.5" stroke="#3a5ab0"/><rect x="1.5" y="7" width="10" height="7" fill="url(#gg)"/><path d="M14.8 1.5 L16.3 2.7 L9.2 12.2 L7.2 13.2 L7.7 11 Z" fill="#f7a818" stroke="#c07010" stroke-width="0.5"/><circle cx="15.6" cy="1.6" r="1.1" fill="#c81818"/></svg>
<div class="t" style="left:21.3px;top:679px;font:11.5px 'Liberation Sans',sans-serif;line-height:1;color:#000;letter-spacing:-0.372px;">Datei</div>
<div class="t" style="left:58px;top:679px;font:11.5px 'Liberation Sans',sans-serif;line-height:1;color:#000;letter-spacing:-0.362px;">Bearbeiten</div>
<div class="t" style="left:123px;top:679px;font:11.5px 'Liberation Sans',sans-serif;line-height:1;color:#000;letter-spacing:-0.669px;">Suchen</div>
<div class="t" style="left:170px;top:679px;font:11.5px 'Liberation Sans',sans-serif;line-height:1;color:#000;letter-spacing:-0.103px;">Ansicht</div>
<div class="t" style="left:217px;top:679px;font:11.5px 'Liberation Sans',sans-serif;line-height:1;color:#000;letter-spacing:-0.493px;">Kodierung</div>
<div class="t" style="left:277px;top:679px;font:11.5px 'Liberation Sans',sans-serif;line-height:1;color:#000;letter-spacing:-0.654px;">Sprachen</div>
<div class="t" style="left:333px;top:679px;font:11.5px 'Liberation Sans',sans-serif;line-height:1;color:#000;letter-spacing:-0.466px;">Einstellungen</div>
<div class="t" style="left:408px;top:679px;font:11.5px 'Liberation Sans',sans-serif;line-height:1;color:#000;letter-spacing:-0.391px;">Makro</div>
<div class="t" style="left:450px;top:679px;font:11.5px 'Liberation Sans',sans-serif;line-height:1;color:#000;letter-spacing:-0.493px;">Ausführen</div>
<div class="t" style="left:511px;top:679px;font:11.5px 'Liberation Sans',sans-serif;line-height:1;color:#000;letter-spacing:-0.320px;">Erweiterungen</div>
<div class="t" style="left:593px;top:679px;font:11.5px 'Liberation Sans',sans-serif;line-height:1;color:#000;letter-spacing:-0.286px;">Fenster</div>
<div class="t" style="left:642px;top:679px;font:11.5px 'Liberation Sans',sans-serif;line-height:1;color:#000;letter-spacing:-0.406px;">?</div>
<div class="a" style="left:18px;top:696px;width:1px;height:24px;background:#fff"></div><div class="a" style="left:19px;top:696px;width:1px;height:24px;background:#808080"></div>
<svg style="left:28px;top:697px" width="16" height="16" viewBox="0 0 16 16"><path d="M2.5 0.5 H9.5 L13.5 4.5 V14.5 H2.5 Z" fill="#fff" stroke="#c4c4c4"/><path d="M9.5 0.5 V4.5 H13.5" fill="#ececec" stroke="#c4c4c4"/><circle cx="11.5" cy="12" r="3.2" fill="#3aa53a" stroke="#1c6e1c" stroke-width="0.6"/><path d="M11.5 10.2V13.8 M9.7 12H13.3" stroke="#fff" stroke-width="1.2"/></svg>
<svg style="left:51px;top:697px" width="16" height="16" viewBox="0 0 16 16"><path d="M6.5 0.5 H12 L15.5 4 V11 H6.5 Z" fill="#dfe9fb" stroke="#6f92d8"/><path d="M0.5 6 H6 L7 7.5 H14 V15.5 H0.5 Z" fill="#f7c860" stroke="#b88a1e"/><path d="M1 10H13.5" stroke="#fbe3a0"/></svg>
<svg style="left:74px;top:697px" width="16" height="16" viewBox="0 0 16 16"><rect x="0.5" y="0.5" width="15" height="14.5" rx="1" fill="#707070"/><rect x="4" y="1" width="8.5" height="5" fill="#f0f0f0"/><rect x="5.5" y="2.2" width="6" height="2.6" fill="#8a8a8a"/><rect x="3.5" y="9.5" width="9" height="5.5" fill="#707070" stroke="#e0e0e0" stroke-width="1.2"/></svg>
<svg style="left:97px;top:697px" width="16" height="16" viewBox="0 0 16 16"><rect x="0.5" y="1" width="10" height="10" fill="#6e6e6e"/><rect x="2.5" y="3" width="10" height="10" fill="#6e6e6e" stroke="#d4d0c8" stroke-width="0.6"/><rect x="4.5" y="5" width="10.5" height="10.5" fill="#6e6e6e" stroke="#d4d0c8" stroke-width="0.6"/><rect x="3" y="1.5" width="5" height="1.5" fill="#eee"/><rect x="5" y="3.5" width="5" height="1.5" fill="#eee"/><rect x="7.5" y="6" width="5.5" height="3" fill="#eee"/><rect x="9" y="7" width="3" height="1.2" fill="#888"/></svg>
<svg style="left:120px;top:697px" width="16" height="16" viewBox="0 0 16 16"><path d="M2.5 0.5 H9.5 L13.5 4.5 V14.5 H2.5 Z" fill="#fff" stroke="#c4c4c4"/><path d="M9.5 0.5 V4.5 H13.5" fill="#ececec" stroke="#c4c4c4"/><path d="M5 6H11 M5 8H11 M5 10H9" stroke="#aaa"/><circle cx="11.5" cy="12" r="3.3" fill="#f07820" stroke="#b04c0a" stroke-width="0.6"/><path d="M9.7 12H13.3" stroke="#fff" stroke-width="1.4"/></svg>
<svg style="left:143px;top:697px" width="16" height="16" viewBox="0 0 16 16"><path d="M1.5 0.5 H6.5 L9.5 3.5 V10.5 H1.5 Z" fill="#fff" stroke="#aaa"/><path d="M4.5 3.5 H9.5 L12.5 6.5 V13.5 H4.5 Z" fill="#fff" stroke="#aaa"/><circle cx="11.5" cy="12" r="3.3" fill="#f07820" stroke="#b04c0a" stroke-width="0.6"/><path d="M9.7 12H13.3" stroke="#fff" stroke-width="1.4"/></svg>
<svg style="left:166px;top:697px" width="16" height="16" viewBox="0 0 16 16"><path d="M4 6 V0.8 H12 V6" fill="#cfe0fa" stroke="#7a9bd8"/><rect x="0.8" y="6" width="14.4" height="7" rx="2" fill="#e4e4e4" stroke="#7a7a7a"/><path d="M3.5 11.5 H12.5 V15.3 H3.5 Z" fill="#fff" stroke="#888"/></svg>
<div class="a" style="left:190px;top:696px;width:1px;height:19px;background:#808080"></div><div class="a" style="left:191px;top:696px;width:1px;height:19px;background:#fff"></div>
<svg style="left:198px;top:697px" width="16" height="16" viewBox="0 0 16 16"><path d="M10 0.5 L11.5 1 L8 10 L6 9 Z M4 4 L5.5 3 L12 10 L9.5 11 Z" fill="#555"/><circle cx="5" cy="12.5" r="2.3" fill="none" stroke="#555" stroke-width="1.5"/><circle cx="11.5" cy="12.5" r="2.3" fill="none" stroke="#555" stroke-width="1.5"/></svg>
<svg style="left:220px;top:697px" width="16" height="16" viewBox="0 0 16 16"><path d="M1.5 1.5 H7 L9.5 4 V11.5 H1.5 Z" fill="#d8d8d8" stroke="#555"/><path d="M6.5 5.5 H12 L14.5 8 V15.5 H6.5 Z" fill="#f0f0f0" stroke="#555"/></svg>
<svg style="left:243px;top:697px" width="16" height="16" viewBox="0 0 16 16"><rect x="1" y="2.5" width="11" height="13" fill="#777" stroke="#444"/><rect x="4" y="0.8" width="5" height="3" fill="#bbb" stroke="#444"/><path d="M7.5 6.5 H12 L14.5 9 V15.5 H7.5 Z" fill="#e8e8e8" stroke="#444"/></svg>
<div class="a" style="left:266px;top:696px;width:1px;height:19px;background:#808080"></div><div class="a" style="left:267px;top:696px;width:1px;height:19px;background:#fff"></div>
<svg style="left:274px;top:697px" width="16" height="16" viewBox="0 0 16 16"><g transform="translate(0.6 0.8)" opacity="0.9"><path d="M3 3.5 H9.5 A3.7 3.7 0 0 1 9.5 11 H5" fill="none" stroke="#fff" stroke-width="3"/><path d="M0.5 11 L5.8 6.8 V15.2 Z" fill="#fff"/></g><path d="M3 3.5 H9.5 A3.7 3.7 0 0 1 9.5 11 H5" fill="none" stroke="#6e6e6e" stroke-width="3"/><path d="M0.5 11 L5.8 6.8 V15.2 Z" fill="#6e6e6e"/></svg>
<svg style="left:297px;top:697px" width="16" height="16" viewBox="0 0 16 16"><g transform="translate(0.6 0.8)" opacity="0.9"><path d="M13 12.5 H6.5 A3.7 3.7 0 0 1 6.5 5 H11" fill="none" stroke="#fff" stroke-width="3"/><path d="M15.5 5 L10.2 0.8 V9.2 Z" fill="#fff"/></g><path d="M13 12.5 H6.5 A3.7 3.7 0 0 1 6.5 5 H11" fill="none" stroke="#6e6e6e" stroke-width="3"/><path d="M15.5 5 L10.2 0.8 V9.2 Z" fill="#6e6e6e"/></svg>
<div class="a" style="left:320px;top:696px;width:1px;height:19px;background:#808080"></div><div class="a" style="left:321px;top:696px;width:1px;height:19px;background:#fff"></div>
<svg style="left:328px;top:697px" width="16" height="16" viewBox="0 0 16 16"><g fill="#444"><rect x="1" y="4" width="5" height="9" rx="1"/><rect x="10" y="4" width="5" height="9" rx="1"/><rect x="6" y="6" width="4" height="3"/><rect x="2" y="1" width="3" height="4"/><rect x="11" y="1" width="3" height="4"/></g><circle cx="3.5" cy="11" r="1.3" fill="#ccc"/><circle cx="12.5" cy="11" r="1.3" fill="#ccc"/></svg>
<svg style="left:351px;top:697px" width="16" height="16" viewBox="0 0 16 16"><text x="0" y="7" font-family="Liberation Sans" font-size="8" font-weight="bold" fill="#1c5fc0">b</text><text x="7" y="15" font-family="Liberation Sans" font-size="8" font-weight="bold" fill="#1c5fc0">a</text><path d="M6 3 H12 V7 M3 9 V13 H6" fill="none" stroke="#3a9ad8"/><path d="M10 6 L12 9 L14 6 Z M5 11 L8 13 L5 15 Z" fill="#3a9ad8"/></svg>
<div class="a" style="left:374px;top:696px;width:1px;height:19px;background:#808080"></div><div class="a" style="left:375px;top:696px;width:1px;height:19px;background:#fff"></div>
<svg style="left:383px;top:697px" width="16" height="16" viewBox="0 0 16 16"><circle cx="6" cy="6" r="4.5" fill="#e6f0e0" stroke="#8a8a8a" stroke-width="1.3"/><path d="M9.5 9.5 L14.5 14.5" stroke="#c8901c" stroke-width="2.4"/><path d="M3.8 6H8.2 M6 3.8V8.2" stroke="#2a9a2a" stroke-width="1.5"/></svg>
<svg style="left:406px;top:697px" width="16" height="16" viewBox="0 0 16 16"><circle cx="6" cy="6" r="4.5" fill="#f4e6e0" stroke="#8a8a8a" stroke-width="1.3"/><path d="M9.5 9.5 L14.5 14.5" stroke="#c8901c" stroke-width="2.4"/><path d="M3.8 6H8.2" stroke="#d83a1c" stroke-width="1.5"/></svg>
<div class="a" style="left:428px;top:696px;width:1px;height:19px;background:#808080"></div><div class="a" style="left:429px;top:696px;width:1px;height:19px;background:#fff"></div>
<svg style="left:436px;top:697px" width="16" height="16" viewBox="0 0 16 16"><rect x="0.7" y="0.7" width="14" height="12" rx="1" fill="#fff" stroke="#5a8ad8" stroke-width="1.3"/><path d="M1 2H14.5" stroke="#8ab0e8" stroke-width="1.6"/><path d="M6 2V12.5" stroke="#5a8ad8"/><rect x="6.5" y="9" width="9" height="7" rx="0.8" fill="#f2c24a" stroke="#c8922a" stroke-width="0.8"/><path d="M8.5 9 V7 A2.5 2.5 0 0 1 13.5 7 V9" fill="none" stroke="#a8a8a8" stroke-width="1.6"/></svg>
<svg style="left:459px;top:697px" width="16" height="16" viewBox="0 0 16 16"><rect x="0.7" y="0.7" width="14" height="12" rx="1" fill="#fff" stroke="#5a8ad8" stroke-width="1.3"/><path d="M1 2H14.5" stroke="#8ab0e8" stroke-width="1.6"/><path d="M1 7H14.5" stroke="#5a8ad8"/><rect x="6.5" y="9" width="9" height="7" rx="0.8" fill="#f2c24a" stroke="#c8922a" stroke-width="0.8"/><path d="M8.5 9 V7 A2.5 2.5 0 0 1 13.5 7 V9" fill="none" stroke="#a8a8a8" stroke-width="1.6"/></svg>
<div class="a" style="left:483px;top:696px;width:1px;height:19px;background:#808080"></div><div class="a" style="left:484px;top:696px;width:1px;height:19px;background:#fff"></div>
<svg style="left:490px;top:697px" width="16" height="16" viewBox="0 0 16 16"><path d="M0 2.5H9 M0 5H9" stroke="#222" stroke-width="1.4"/><path d="M0 8.8H9" stroke="#6a9ae8" stroke-width="1.2"/><path d="M0 12.5H9.5" stroke="#6a9ae8" stroke-width="2.4"/><path d="M11 7.5 H15.5 V12.5 H12" fill="none" stroke="#3a72d8" stroke-width="1.3"/><path d="M10.5 12.5 L13.5 10 V15 Z" fill="#3a72d8"/></svg>
<div class="t" style="left:515px;top:697px;font:bold 15px 'Liberation Sans',sans-serif;line-height:1;color:#5a96ee">¶</div>
<div class="a" style="left:533px;top:694px;width:23px;height:22px;background:#fff;background-image:conic-gradient(#fff 25%,#d4d0c8 0 50%,#fff 0 75%,#d4d0c8 0);background-size:2px 2px;border:1px solid;border-color:#808080 #fff #fff #808080"></div>
<svg style="left:537px;top:697px" width="16" height="16" viewBox="0 0 16 16"><path d="M6.5 0V15" stroke="#e02020" stroke-dasharray="1.5 1.5"/><path d="M1 1.5H5 M8 1.5H15" stroke="#14146e" stroke-width="1.4"/><path d="M8 4.5H12 M8 7.3H15 M8 10H13" stroke="#14146e" stroke-width="1.8"/><path d="M1 12.5H5 M8 12.5H15 M8 15H10" stroke="#14146e" stroke-width="1.4"/></svg>
<svg style="left:560px;top:697px" width="16" height="16" viewBox="0 0 16 16"><rect x="0.5" y="1.5" width="15" height="12" fill="#dfe9fb" stroke="#3a78d8"/><rect x="0.5" y="1.5" width="15" height="3" fill="#4a8ae8"/><path d="M9 5 L5 10 H8 L6.5 15 L12 8.5 H9 Z" fill="#f7b020" stroke="#b07a10" stroke-width="0.6"/></svg>
<div class="a" style="left:583px;top:696px;width:1px;height:19px;background:#808080"></div><div class="a" style="left:584px;top:696px;width:1px;height:19px;background:#fff"></div>
<svg style="left:591px;top:699px" width="13" height="13" viewBox="0 0 13 13"><rect x="0.5" y="0.5" width="12" height="12" fill="#f4f4f4" stroke="#808080"/><circle cx="6.5" cy="6.5" r="3.6" fill="#d80000"/></svg>
<svg style="left:614px;top:699px" width="13" height="13" viewBox="0 0 13 13"><rect x="0.5" y="0.5" width="12" height="12" fill="#f4f4f4" stroke="#808080"/><rect x="3" y="3" width="7" height="7" fill="#000"/></svg>
<svg style="left:637px;top:699px" width="13" height="13" viewBox="0 0 13 13"><rect x="0.5" y="0.5" width="12" height="12" fill="#e4ecfa" stroke="#7a8ab0"/><path d="M4.5 3 L9.5 6.5 L4.5 10 Z" fill="#2a5ad0"/></svg>
<svg style="left:660px;top:699px" width="13" height="13" viewBox="0 0 13 13"><rect x="0.5" y="0.5" width="12" height="12" fill="#e4ecfa" stroke="#7a8ab0"/><path d="M2.5 3 L6.5 6.5 L2.5 10 Z M6.5 3 L10.5 6.5 L6.5 10 Z" fill="#2a5ad0"/></svg>
<svg style="left:682px;top:697px" width="16" height="16" viewBox="0 0 16 16"><rect x="0.5" y="0.5" width="11" height="11" fill="#fff" stroke="#3a6ad8"/><path d="M2.5 3.5H9 M2.5 6H9" stroke="#3a6ad8"/><rect x="5.5" y="7.5" width="9" height="8" fill="#5a7ab8" stroke="#2a4a88"/><rect x="7.5" y="8" width="5" height="3" fill="#fff"/></svg>
<div class="a" style="left:706px;top:696px;width:1px;height:19px;background:#808080"></div><div class="a" style="left:707px;top:696px;width:1px;height:19px;background:#fff"></div>
<svg style="left:714px;top:699px" width="14" height="12" viewBox="0 0 14 12"><path d="M0.5 0.9H13.5 M0.5 11.1H13.5" stroke="#3a78e8" stroke-width="1.7"/><path d="M1.5 2 H12.5 L7 6.2 Z M1.5 10 H12.5 L7 5.8 Z" fill="#3a78e8"/></svg>
<svg style="left:737px;top:701px" width="14" height="8" viewBox="0 0 14 8"><path d="M0.3 7.5 L7 0.8 L13.7 7.5 Z" fill="#3a78e8"/></svg>
<svg style="left:760px;top:701px" width="14" height="8" viewBox="0 0 14 8"><path d="M0.3 0.5 L7 7.2 L13.7 0.5 Z" fill="#3a78e8"/></svg>
<svg style="left:783px;top:699px" width="14" height="12" viewBox="0 0 14 12"><path d="M0.5 0.9H13.5 M0.5 11.1H13.5" stroke="#3a78e8" stroke-width="1.7"/><path d="M1.5 2 H12.5 L7 6.2 Z M1.5 10 H12.5 L7 5.8 Z" fill="#3a78e8"/></svg>
<svg style="left:806px;top:697px" width="16" height="16" viewBox="0 0 16 16"><path d="M0.5 4 H6 L7 5.5 H14 V14.5 H0.5 Z" fill="#f7c860" stroke="#b88a1e"/><rect x="5" y="8" width="9" height="6" fill="#e4e4e4" stroke="#666" stroke-width="0.8"/><rect x="6.5" y="6.5" width="6" height="2" fill="#fff" stroke="#888" stroke-width="0.6"/></svg>
<svg style="left:827px;top:697px" width="16" height="16" viewBox="0 0 16 16"><text x="0" y="6" font-family="Liberation Sans" font-size="6.5" font-weight="bold" fill="#3a9a5a">ABC</text><path d="M3 9 L7 13.5 L15 4" fill="none" stroke="#2a6ae0" stroke-width="2.2"/></svg>
<div class="a" style="left:18px;top:724px;width:83px;height:21px;background:#c0c0c0;border-radius:3px 3px 0 0;border:1px solid #f4f4f4;border-bottom:0"></div>
<svg style="left:23px;top:728px" width="14" height="14" viewBox="0 0 14 14"><rect x="0.5" y="0.5" width="13" height="13" fill="#3c6cc0" stroke="#2a4a90"/><rect x="3" y="1" width="8" height="4" fill="#8aa8e0"/><rect x="3" y="8" width="8" height="4" fill="#4a8a6a"/></svg>
<div class="t" style="left:41.5px;top:731px;font:11.5px 'Liberation Sans',sans-serif;line-height:1;color:#808080;letter-spacing:-0.428px;">change.log</div>
<div class="a" style="left:101px;top:722px;width:86px;height:23px;background:#d4d0c8;border-right:2px solid #404040;border-left:1px solid #fff;border-top:1px solid #fff"></div>
<div class="a" style="left:101px;top:723px;width:85px;height:4px;background:#faaa3c;border-radius:2px 2px 0 0"></div>
<svg style="left:106px;top:728px" width="14" height="14" viewBox="0 0 14 14"><rect x="0.5" y="0.5" width="13" height="13" fill="#6aa0e8" stroke="#3a6ab8"/><rect x="3" y="1" width="8" height="4" fill="#fff"/><rect x="3" y="8" width="8" height="4" fill="#9ad89a"/></svg>
<div class="t" style="left:127.5px;top:731px;font:11.5px 'Liberation Sans',sans-serif;line-height:1;color:#000;letter-spacing:-0.884px;">maxima.xml</div>
<div class="a" style="left:18px;top:745px;width:886px;height:96px;background:#404040;border-top:1px solid #808080;border-left:1px solid #808080"></div>
<div class="a" style="left:20px;top:747px;width:884px;height:94px;background:#fff"></div>
<div class="a" style="left:20px;top:747px;width:46px;height:94px;background:#e4e4e4"></div>
<div class="a" style="left:66px;top:748px;width:16px;height:93px;background:#f4f4f4;background-image:conic-gradient(#fff 25%,#e8e8e8 0 50%,#fff 0 75%,#e8e8e8 0);background-size:2px 2px"></div>
<div class="a" style="left:82px;top:748px;width:822px;height:18px;background:#e8e8ff"></div>
<div class="t" style="left:42px;top:751px;font:13.33px 'Liberation Mono',monospace;line-height:1;color:#8a8a8a;">1</div>
<div class="t" style="left:42px;top:769px;font:13.33px 'Liberation Mono',monospace;line-height:1;color:#8a8a8a;">2</div>
<div class="t" style="left:42px;top:787px;font:13.33px 'Liberation Mono',monospace;line-height:1;color:#8a8a8a;">3</div>
<div class="t" style="left:42px;top:805px;font:13.33px 'Liberation Mono',monospace;line-height:1;color:#8a8a8a;">4</div>
<div class="t" style="left:42px;top:823px;font:13.33px 'Liberation Mono',monospace;line-height:1;color:#8a8a8a;">5</div>
<div class="a" style="left:73px;top:757px;width:1px;height:84px;background:#f00"></div>
<div class="a" style="left:68px;top:752px;width:11px;height:11px;background:#fff;border:1px solid #f00"></div><div class="a" style="left:70px;top:757px;width:7px;height:1px;background:#f00"></div>
<div class="a" style="left:68px;top:770px;width:11px;height:11px;background:#fff;border:1px solid #f00"></div><div class="a" style="left:70px;top:775px;width:7px;height:1px;background:#808080"></div>
<div class="a" style="left:114px;top:784px;width:1px;height:57px;background:repeating-linear-gradient(#b0b0b0 0 1px,transparent 1px 2px)"></div>
<div class="t" style="left:81.5px;top:751px;font:13.33px 'Liberation Mono',monospace;line-height:1"><span style="color:#0000ff">&lt;MaximaPlugin&gt;</span></div>
<div class="t" style="left:113.5px;top:769px;font:13.33px 'Liberation Mono',monospace;line-height:1"><span style="color:#0000ff">&lt;Settings&gt;</span></div>
<div class="t" style="left:145.5px;top:787px;font:13.33px 'Liberation Mono',monospace;line-height:1"><span style="color:#0000ff">&lt;PathToMaxima.bat&gt;</span><span style="color:#000;font-weight:bold">D:\Maxima-5.34.1\bin\maxima.bat</span><span style="color:#0000ff">&lt;/PathToMaxima.bat&gt;</span></div>
<div class="t" style="left:145.5px;top:805px;font:13.33px 'Liberation Mono',monospace;line-height:1"><span style="color:#0000ff">&lt;ID&gt;</span><span style="color:#000;font-weight:bold">13</span><span style="color:#0000ff">&lt;/ID&gt;</span></div>
<div class="t" style="left:145.5px;top:823px;font:13.33px 'Liberation Mono',monospace;line-height:1"><span style="color:#0000ff">&lt;Version</span><span style="color:#000"> </span><span style="color:#ff0000">Major</span><span style="color:#000">=</span><span style="color:#8000ff;font-weight:bold">&quot;1&quot;</span><span style="color:#000"> </span><span style="color:#ff0000">Minor</span><span style="color:#000">=</span><span style="color:#8000ff;font-weight:bold">&quot;97&quot;</span><span style="color:#000"> </span><span style="color:#ff0000">Build</span><span style="color:#000">=</span><span style="color:#8000ff;font-weight:bold">&quot;5327&quot;</span><span style="color:#000"> </span><span style="color:#ff0000">Revision</span><span style="color:#000">=</span><span style="color:#8000ff;font-weight:bold">&quot;41309&quot;</span><span style="color:#0000ff">&gt;</span><span style="color:#000;font-weight:bold">1.97.5327.41309</span><span style="color:#0000ff">&lt;/Version&gt;</span></div>
</body></html>
